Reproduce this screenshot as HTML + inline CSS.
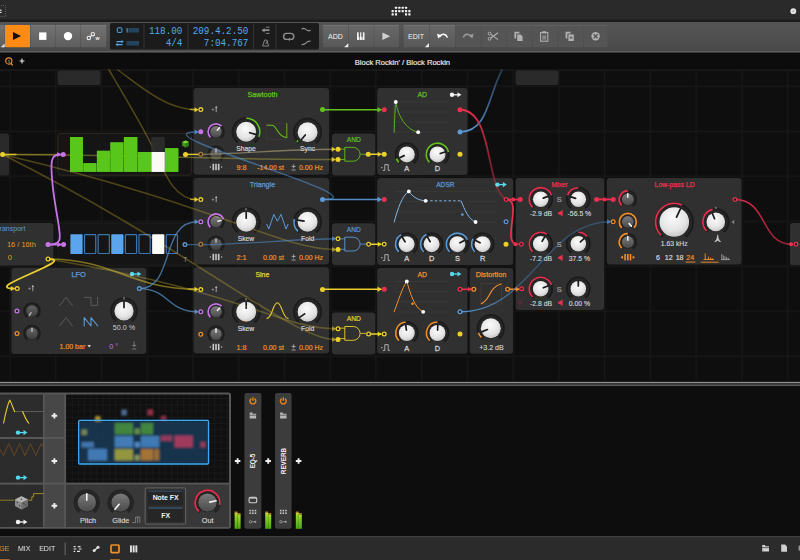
<!DOCTYPE html>
<html lang="en"><head><meta charset="utf-8"><title>Block Rockin</title>
<style>html,body{margin:0;padding:0;background:#131313;overflow:hidden}svg{display:block}</style>
</head><body>
<svg width="800" height="560" viewBox="0 0 800 560">
<defs>
<radialGradient id="kw" cx="0.45" cy="0.35" r="0.75"><stop offset="0" stop-color="#fbfbfb"/><stop offset="0.6" stop-color="#e4e4e4"/><stop offset="1" stop-color="#b9b9b9"/></radialGradient>
<linearGradient id="kd" x1="0" y1="0" x2="0" y2="1"><stop offset="0" stop-color="#7a7a7a"/><stop offset="1" stop-color="#4a4a4a"/></linearGradient>
<linearGradient id="tb" x1="0" y1="0" x2="0" y2="1"><stop offset="0" stop-color="#565656"/><stop offset="1" stop-color="#484848"/></linearGradient>
<linearGradient id="btn" x1="0" y1="0" x2="0" y2="1"><stop offset="0" stop-color="#727272"/><stop offset="1" stop-color="#5e5e5e"/></linearGradient>
<linearGradient id="btn2" x1="0" y1="0" x2="0" y2="1"><stop offset="0" stop-color="#686868"/><stop offset="1" stop-color="#585858"/></linearGradient>
<linearGradient id="vu" x1="0" y1="0" x2="0" y2="1"><stop offset="0" stop-color="#c4dc30"/><stop offset="0.2" stop-color="#8ed422"/><stop offset="1" stop-color="#4aa816"/></linearGradient>
<pattern id="grid" x="9.3" y="40.6" width="45.74" height="45" patternUnits="userSpaceOnUse"><rect width="45.74" height="45" fill="#0e0e0e"/><rect width="1.4" height="45" fill="#171717"/><rect width="45.74" height="1.4" fill="#171717"/></pattern>
<pattern id="dots" x="78" y="392" width="6.2" height="6.2" patternUnits="userSpaceOnUse"><rect width="6.2" height="6.2" fill="#101010"/><rect width="0.8" height="6.2" fill="#191919"/><rect width="6.2" height="0.8" fill="#191919"/></pattern>
<filter id="bl" x="-20%" y="-20%" width="140%" height="140%"><feGaussianBlur stdDeviation="0.9"/></filter>
</defs>
<rect x="0" y="0" width="800" height="560" fill="#0e0e0e" />
<rect x="0" y="0" width="800" height="20" fill="#2a2a2a" />
<rect x="0" y="19.5" width="800" height="3" fill="#1c1c1c" />
<rect x="0" y="22" width="800" height="30" fill="url(#tb)" />
<rect x="0" y="51.3" width="800" height="1.4" fill="#6a6a6a" />
<rect x="0" y="52.7" width="800" height="17.3" fill="#0c0c0c" />
<rect x="0" y="70" width="800" height="312" fill="url(#grid)" />
<rect x="0" y="69.5" width="800" height="1.2" fill="#1f1f1f" />
<rect x="-3" y="5.6" width="8.6" height="11" fill="none" stroke="#777" stroke-width="0.7" stroke-dasharray="1 1"/>
<rect x="0" y="9.6" width="1.6" height="1.2" fill="#ddd" />
<rect x="0" y="11.8" width="1.6" height="1.2" fill="#ddd" />
<rect x="394.9" y="6.65" width="2.2" height="2.2" fill="#f2f2f2" rx="0.5" />
<rect x="398.25" y="6.65" width="2.2" height="2.2" fill="#f2f2f2" rx="0.5" />
<rect x="401.6" y="6.65" width="2.2" height="2.2" fill="#f2f2f2" rx="0.5" />
<rect x="404.95" y="6.65" width="2.2" height="2.2" fill="#f2f2f2" rx="0.5" />
<rect x="391.55" y="10" width="2.2" height="2.2" fill="#f2f2f2" rx="0.5" />
<rect x="394.9" y="10" width="2.2" height="2.2" fill="#f2f2f2" rx="0.5" />
<rect x="398.25" y="10" width="2.2" height="2.2" fill="#f2f2f2" rx="0.5" />
<rect x="401.6" y="10" width="2.2" height="2.2" fill="#f2f2f2" rx="0.5" />
<rect x="404.95" y="10" width="2.2" height="2.2" fill="#f2f2f2" rx="0.5" />
<rect x="408.3" y="10" width="2.2" height="2.2" fill="#f2f2f2" rx="0.5" />
<rect x="391.55" y="13.35" width="2.2" height="2.2" fill="#f2f2f2" rx="0.5" />
<rect x="394.9" y="13.35" width="2.2" height="2.2" fill="#f2f2f2" rx="0.5" />
<rect x="404.95" y="13.35" width="2.2" height="2.2" fill="#f2f2f2" rx="0.5" />
<rect x="408.3" y="13.35" width="2.2" height="2.2" fill="#f2f2f2" rx="0.5" />
<circle cx="793.3" cy="11.2" r="2.9" fill="#e6e6e6" stroke="none" stroke-width="0" opacity="1"/>
<circle cx="793.3" cy="11.2" r="1.2" fill="#bdbdbd" stroke="none" stroke-width="0" opacity="1"/>
<rect x="0" y="25" width="4.6" height="22.3" fill="url(#btn)" />
<path d="M0.8 47.3L4.6 47.3L4.6 43.5Z" fill="#e8e8e8"/>
<rect x="5" y="25" width="25" height="22.3" fill="#ff8a14" rx="1" />
<path d="M13 32.1L21 36.1L13 40.1Z" fill="#111"/>
<rect x="30.5" y="25" width="24.5" height="22.3" fill="url(#btn)" rx="1" />
<rect x="30.5" y="25" width="24.5" height="0.8" fill="#8a8a8a" opacity="0.45"/>
<rect x="39.1" y="32.4" width="7.3" height="7.5" fill="#ffffff" />
<rect x="55.5" y="25" width="25" height="22.3" fill="url(#btn)" rx="1" />
<rect x="55.5" y="25" width="25" height="0.8" fill="#8a8a8a" opacity="0.45"/>
<circle cx="68" cy="36.1" r="4.2" fill="#ffffff" stroke="none" stroke-width="0" opacity="1"/>
<rect x="81" y="25" width="25.3" height="22.3" fill="url(#btn)" rx="1" />
<rect x="81" y="25" width="25.3" height="0.8" fill="#8a8a8a" opacity="0.45"/>
<circle cx="88.8" cy="38" r="1.7" fill="none" stroke="#f0f0f0" stroke-width="1.1" opacity="1"/>
<circle cx="92.8" cy="34.2" r="1.7" fill="none" stroke="#f0f0f0" stroke-width="1.1" opacity="1"/>
<line x1="90" y1="36.9" x2="91.7" y2="35.3" stroke="#f0f0f0" stroke-width="1.1" opacity="1" stroke-linecap="butt"/>
<text transform="translate(97.4 40.2) scale(0.95 1)" font-family='"Liberation Sans", sans-serif' font-size="5.4" fill="#f4f4f4" text-anchor="middle" font-weight="bold" >w</text>
<rect x="110" y="23" width="209" height="26.6" fill="#1b1b1b" rx="1.5" />
<rect x="143.6" y="23.6" width="0.8" height="25.4" fill="#3a3a3a" />
<rect x="187.6" y="23.6" width="0.8" height="25.4" fill="#3a3a3a" />
<rect x="253.1" y="23.6" width="0.8" height="25.4" fill="#3a3a3a" />
<rect x="275.6" y="23.6" width="0.8" height="25.4" fill="#3a3a3a" />
<rect x="117.3" y="27.8" width="4.6" height="4.6" fill="none" stroke="#52aae6" stroke-width="1" rx="0.8"/>
<rect x="126.6" y="28" width="1" height="4.6" fill="#52aae6" />
<rect x="128.4" y="28" width="10.6" height="4.6" fill="#24445c" />
<path d="M116.6 41.6H122.6M116.6 44.6H122.6" stroke="#52aae6" stroke-width="1.2" fill="none"/>
<path d="M121.6 39.9L123.8 41.6L121.6 43.3ZM117.6 42.9L115.4 44.6L117.6 46.3Z" fill="#52aae6"/>
<rect x="126.6" y="41" width="12.4" height="4.6" fill="#24445c" />
<text transform="translate(182.4 34) scale(0.86 1)" font-family='"Liberation Mono", monospace' font-size="10.8" fill="#52aae6" text-anchor="end" font-weight="normal" >118.00</text>
<text transform="translate(182.4 46.2) scale(0.86 1)" font-family='"Liberation Mono", monospace' font-size="10.8" fill="#52aae6" text-anchor="end" font-weight="normal" >4/4</text>
<text transform="translate(248.4 34) scale(0.86 1)" font-family='"Liberation Mono", monospace' font-size="10.8" fill="#52aae6" text-anchor="end" font-weight="normal" >209.4.2.50</text>
<text transform="translate(248.4 46.2) scale(0.86 1)" font-family='"Liberation Mono", monospace' font-size="10.8" fill="#52aae6" text-anchor="end" font-weight="normal" >7:04.767</text>
<path d="M261.5 30.2L264.7 27.9V32.5ZM264.7 29.3H269.5V31.1H264.7Z" fill="#8e8e8e"/>
<path d="M266 33.4H269.5M266 27.2H269.5" stroke="#8e8e8e" stroke-width="0.9"/>
<path d="M262.6 46L264.6 40H266.6L268.6 46ZM265.6 44L268 40.6" fill="none" stroke="#8e8e8e" stroke-width="0.9"/>
<rect x="283.6" y="33.4" width="10.2" height="6" rx="3" fill="none" stroke="#8e8e8e" stroke-width="1.4"/>
<path d="M287.4 39.4L290 37.8V41Z" fill="#8e8e8e"/>
<path d="M301.6 29.2C303.6 27.4 305 28.4 306.2 29.6C307.4 30.8 309 31.4 310.6 30" fill="none" stroke="#8e8e8e" stroke-width="1.2"/>
<path d="M301.6 44.6C304.4 44.8 305.4 43.6 306.2 42.8C307.2 41.6 308.6 41 310.6 41.2" fill="none" stroke="#8e8e8e" stroke-width="1.2"/>
<rect x="323" y="25" width="25.4" height="22.3" fill="url(#btn2)" rx="1" />
<rect x="323" y="25" width="25.4" height="0.8" fill="#8a8a8a" opacity="0.45"/>
<path d="M344.2 47.3L348.4 47.3L348.4 43.1Z" fill="#e8e8e8"/>
<text transform="translate(335.4 39.2) scale(0.95 1)" font-family='"Liberation Sans", sans-serif' font-size="7.4" fill="#f2f2f2" text-anchor="middle" font-weight="normal" >ADD</text>
<rect x="349" y="25" width="24.6" height="22.3" fill="url(#btn2)" rx="1" />
<rect x="349" y="25" width="24.6" height="0.8" fill="#8a8a8a" opacity="0.45"/>
<rect x="357" y="32.4" width="2.1" height="7.6" fill="#f4f4f4" />
<rect x="359.7" y="32.4" width="2.1" height="7.6" fill="#f4f4f4" />
<rect x="362.4" y="32.4" width="2.1" height="7.6" fill="#f4f4f4" />
<rect x="358.7" y="32.4" width="1.4" height="4.4" fill="#5a5a5a" />
<rect x="361.4" y="32.4" width="1.4" height="4.4" fill="#5a5a5a" />
<rect x="374.2" y="25" width="24.8" height="22.3" fill="url(#btn2)" rx="1" />
<rect x="374.2" y="25" width="24.8" height="0.8" fill="#8a8a8a" opacity="0.45"/>
<path d="M382.4 32.4L390.2 36.2L382.4 40Z" fill="#d0d0d0"/>
<rect x="403.6" y="25" width="25.4" height="22.3" fill="url(#btn2)" rx="1" />
<rect x="403.6" y="25" width="25.4" height="0.8" fill="#8a8a8a" opacity="0.45"/>
<path d="M424.8 47.3L429 47.3L429 43.1Z" fill="#e8e8e8"/>
<text transform="translate(416 39.2) scale(0.95 1)" font-family='"Liberation Sans", sans-serif' font-size="7.4" fill="#f2f2f2" text-anchor="middle" font-weight="normal" >EDIT</text>
<rect x="429.6" y="25" width="25.4" height="22.3" fill="url(#btn2)" rx="1" />
<rect x="429.6" y="25" width="25.4" height="0.8" fill="#8a8a8a" opacity="0.45"/>
<path d="M439.6 36.8C441.4 33.4 445.6 33 447.4 37.6" fill="none" stroke="#fff" stroke-width="1.5"/>
<path d="M437 33.8L441.8 35.2L438.2 38.6Z" fill="#fff"/>
<rect x="455.6" y="25" width="25.2" height="22.3" fill="#555555" rx="1" />
<rect x="455.6" y="25" width="25.2" height="0.8" fill="#777" opacity="0.4"/>
<rect x="481.4" y="25" width="25" height="22.3" fill="#555555" rx="1" />
<rect x="481.4" y="25" width="25" height="0.8" fill="#777" opacity="0.4"/>
<rect x="507" y="25" width="25" height="22.3" fill="#555555" rx="1" />
<rect x="507" y="25" width="25" height="0.8" fill="#777" opacity="0.4"/>
<rect x="532.6" y="25" width="25" height="22.3" fill="#555555" rx="1" />
<rect x="532.6" y="25" width="25" height="0.8" fill="#777" opacity="0.4"/>
<rect x="558.2" y="25" width="25" height="22.3" fill="#555555" rx="1" />
<rect x="558.2" y="25" width="25" height="0.8" fill="#777" opacity="0.4"/>
<rect x="583.8" y="25" width="23.8" height="22.3" fill="#555555" rx="1" />
<rect x="583.8" y="25" width="23.8" height="0.8" fill="#777" opacity="0.4"/>
<path d="M463.2 37.6C465 33 469.2 33.4 471 36.8" fill="none" stroke="#9c9c9c" stroke-width="1.4"/>
<path d="M473.6 33.8L468.8 35.2L472.4 38.6Z" fill="#9c9c9c"/>
<circle cx="489.6" cy="33.6" r="1.4" fill="none" stroke="#b0b0b0" stroke-width="1" opacity="1"/>
<circle cx="489.6" cy="38.8" r="1.4" fill="none" stroke="#b0b0b0" stroke-width="1" opacity="1"/>
<path d="M490.8 34.4L498 39.6M490.8 38L498 32.8" stroke="#b0b0b0" stroke-width="1.1" fill="none"/>
<path d="M514.4 31.8H519.4V33.4H516.2V38.4H514.4Z" fill="#b0b0b0"/>
<path d="M517.2 34.4H520.6L522.6 36.4V41H517.2Z" fill="#b0b0b0"/>
<rect x="540.6" y="32.6" width="7.2" height="8.6" fill="none" stroke="#b0b0b0" stroke-width="1.1"/>
<rect x="542.4" y="31.2" width="3.6" height="2.2" fill="#b0b0b0" />
<rect x="542.2" y="35.4" width="4" height="4.2" fill="#b0b0b0" opacity="0.55"/>
<path d="M565.6 31.8H570.6V33.4H567.4V38.4H565.6Z" fill="#b0b0b0"/>
<path d="M568.4 34.4H573.8V41H568.4Z" fill="#b0b0b0"/>
<path d="M569.8 37.7H572.4M571.1 36.4V39" stroke="#555555" stroke-width="0.9"/>
<circle cx="595.6" cy="36.2" r="4.2" fill="#b0b0b0" stroke="none" stroke-width="0" opacity="1"/>
<path d="M593.6 34.2L597.6 38.2M597.6 34.2L593.6 38.2" stroke="#555555" stroke-width="1.3"/>
<circle cx="8.8" cy="61" r="3.1" fill="none" stroke="#f0902a" stroke-width="1.1" opacity="1"/>
<line x1="11" y1="63.4" x2="12.8" y2="65.4" stroke="#f0902a" stroke-width="1.3" opacity="1" stroke-linecap="butt"/>
<text transform="translate(8.8 62.8) scale(1 1)" font-family='"Liberation Sans", sans-serif' font-size="4.2" fill="#f0902a" text-anchor="middle" font-weight="bold" >1</text>
<path d="M19.6 61H24.4M22 58.6V63.4" stroke="#e8e8e8" stroke-width="1.1"/>
<text x="402.4" y="65.2" textLength="95.4" lengthAdjust="spacingAndGlyphs" font-family='"Liberation Sans", sans-serif' font-size="8.1" fill="#e6e6e6" text-anchor="middle" font-weight="normal"  stroke="#e6e6e6" stroke-width="0.2">Block Rockin' / Block Rockin</text>
<g>
<rect x="57.5" y="70.6" width="43" height="14.4" fill="#2a2a2a" rx="2.5" />
<rect x="515.5" y="70.6" width="43" height="14.4" fill="#2a2a2a" rx="2.5" />
<rect x="-3" y="133.5" width="12" height="42" fill="#2a2a2a" rx="2.5" />
<rect x="790" y="223" width="14" height="42.3" fill="#303030" rx="2.5" />
<rect x="57.8" y="133.4" width="133.6" height="41.8" rx="2.5" fill="#151515" stroke="#332a22" stroke-width="0.9"/>
<rect x="70" y="137" width="12.9" height="34.8" fill="#58c61c" />
<rect x="83.4" y="163.2" width="13" height="8.6" fill="#58c61c" />
<rect x="96.9" y="150.8" width="13" height="21" fill="#58c61c" />
<rect x="110.4" y="142.4" width="13" height="29.4" fill="#58c61c" />
<rect x="123.9" y="137" width="13.4" height="34.8" fill="#58c61c" />
<rect x="137.8" y="152" width="13.2" height="19.8" fill="#58c61c" />
<rect x="151.5" y="137" width="13.1" height="15" fill="#2c2c2c" />
<rect x="151.5" y="152" width="13.1" height="19.8" fill="#fbfbf6" />
<rect x="165.1" y="148.2" width="13.2" height="23.6" fill="#58c61c" />
<path d="M182.2 142L185.6 140.4L189 142V145.8L185.6 147.6L182.2 145.8Z" fill="#3f9a18"/>
<path d="M182.2 142L185.6 143.6L189 142L185.6 140.4Z" fill="#7ad63a"/>
<path d="M185.6 143.6V147.6L189 145.8V142Z" fill="#2f7a12"/>
<rect x="-3" y="223" width="56.6" height="42.4" fill="#303030" rx="3" />
<text transform="translate(-4.4 231) scale(0.9 1)" font-family='"Liberation Sans", sans-serif' font-size="7.8" fill="#5b9bd8">Transport</text>
<text transform="translate(21.4 247.4) scale(0.95 1)" font-family='"Liberation Sans", sans-serif' font-size="7.8" fill="#f0902a" text-anchor="middle" font-weight="normal" >16 / 16th</text>
<text transform="translate(9.8 259.6) scale(0.95 1)" font-family='"Liberation Sans", sans-serif' font-size="7.8" fill="#f0902a" text-anchor="middle" font-weight="normal" >0</text>
<rect x="57.8" y="223.2" width="133.6" height="42" rx="2.5" fill="#151515" stroke="#222" stroke-width="0.8"/>
<rect x="70.4" y="234.2" width="12.2" height="19.8" fill="#5aa5ee" rx="0.8" />
<rect x="84.52" y="234.7" width="11.2" height="18.8" fill="none" stroke="#3a76b2" stroke-width="1.2" rx="0.8"/>
<rect x="98.14" y="234.7" width="11.2" height="18.8" fill="none" stroke="#3a76b2" stroke-width="1.2" rx="0.8"/>
<rect x="111.26" y="234.2" width="12.2" height="19.8" fill="#5aa5ee" rx="0.8" />
<rect x="125.38" y="234.7" width="11.2" height="18.8" fill="none" stroke="#3a76b2" stroke-width="1.2" rx="0.8"/>
<rect x="139" y="234.7" width="11.2" height="18.8" fill="none" stroke="#3a76b2" stroke-width="1.2" rx="0.8"/>
<rect x="152.12" y="234.2" width="12.2" height="19.8" fill="#fbfbf8" rx="0.8" />
<rect x="166.24" y="234.7" width="11.2" height="18.8" fill="none" stroke="#3a76b2" stroke-width="1.2" rx="0.8"/>
<text transform="translate(185.2 262) scale(0.9 1)" font-family='"Liberation Sans", sans-serif' font-size="6.5" fill="#9a9a9a" text-anchor="middle" font-weight="normal" >T</text>
<rect x="193.6" y="88" width="135.4" height="86.8" fill="#303030" rx="3" />
<text x="262.4" y="97.4" textLength="30" lengthAdjust="spacingAndGlyphs" font-family='"Liberation Sans", sans-serif' font-size="7.5" fill="#62c21c" text-anchor="middle" font-weight="normal"  stroke="#62c21c" stroke-width="0.25">Sawtooth</text>
<path d="M211.6 109.6H214.2M212.9 108.3V110.9" stroke="#8c8c8c" stroke-width="0.8"/>
<path d="M216.2 107.4V112.2" stroke="#b0b0b0" stroke-width="0.9"/>
<path d="M216.2 105.8L214.9 108L217.5 108Z" fill="#b0b0b0"/>
<path d="M211.7 137.51A7.15 7.15 0 1 1 220.3 137.51" fill="none" stroke="#272727" stroke-width="3.3" stroke-linecap="butt" opacity="1"/>
<path d="M211.03 137.94A7.9 7.9 0 1 1 220.97 137.94" fill="none" stroke="#1d1d1d" stroke-width="1.5" stroke-linecap="butt" opacity="1"/>
<path d="M210.41 137.39A7.9 7.9 0 0 1 221.59 126.21" fill="none" stroke="#c873ea" stroke-width="1.7" stroke-linecap="butt" opacity="1"/>
<circle cx="216" cy="131.8" r="6.1" fill="#1f1f1f" stroke="none" stroke-width="0" opacity="1"/>
<circle cx="216" cy="131.8" r="5.7" fill="url(#kd)" stroke="none" stroke-width="0" opacity="1"/>
<line x1="217.28" y1="130.27" x2="219.48" y2="127.65" stroke="#f0f0f0" stroke-width="1.5" opacity="1" stroke-linecap="round"/>
<path d="M211.7 159.91A7.15 7.15 0 1 1 220.3 159.91" fill="none" stroke="#272727" stroke-width="3.3" stroke-linecap="butt" opacity="1"/>
<path d="M211.03 160.34A7.9 7.9 0 1 1 220.97 160.34" fill="none" stroke="#1d1d1d" stroke-width="1.5" stroke-linecap="butt" opacity="1"/>
<circle cx="216" cy="154.2" r="6.1" fill="#1f1f1f" stroke="none" stroke-width="0" opacity="1"/>
<circle cx="216" cy="154.2" r="5.7" fill="url(#kd)" stroke="none" stroke-width="0" opacity="0.75"/>
<line x1="216" y1="152.2" x2="216" y2="148.78" stroke="#f0f0f0" stroke-width="1.5" opacity="0.6" stroke-linecap="round"/>
<rect x="212.5" y="163.8" width="1.6" height="6.4" fill="#c8c8c8" />
<rect x="215.2" y="163.8" width="1.6" height="6.4" fill="#c8c8c8" />
<rect x="217.9" y="163.8" width="1.6" height="6.4" fill="#c8c8c8" />
<rect x="209.8" y="166.4" width="1.2" height="1.2" fill="#c8c8c8" />
<rect x="221" y="166.4" width="1.2" height="1.2" fill="#c8c8c8" />
<path d="M238.89 141.5A12.15 12.15 0 1 1 253.51 141.5" fill="none" stroke="#272727" stroke-width="4.7" stroke-linecap="butt" opacity="1"/>
<path d="M237.64 142.37A13.6 13.6 0 1 1 254.76 142.37" fill="none" stroke="#1b1b1b" stroke-width="1.6" stroke-linecap="butt" opacity="1"/>
<path d="M246.2 118.2A13.6 13.6 0 0 1 258.81 136.89" fill="none" stroke="#62c21c" stroke-width="1.6" stroke-linecap="butt" opacity="1"/>
<circle cx="246.2" cy="131.8" r="10.5" fill="#1f1f1f" stroke="none" stroke-width="0" opacity="1"/>
<circle cx="246.2" cy="131.8" r="10" fill="url(#kw)" stroke="none" stroke-width="0" opacity="1"/>
<line x1="249.68" y1="132.73" x2="255.67" y2="134.34" stroke="#1a1a1a" stroke-width="1.7" opacity="1" stroke-linecap="round"/>
<path d="M300.29 141.9A12.15 12.15 0 1 1 314.91 141.9" fill="none" stroke="#272727" stroke-width="4.7" stroke-linecap="butt" opacity="1"/>
<path d="M299.04 142.77A13.6 13.6 0 1 1 316.16 142.77" fill="none" stroke="#1b1b1b" stroke-width="1.6" stroke-linecap="butt" opacity="1"/>
<path d="M297.98 141.82A13.6 13.6 0 0 1 296.88 140.57" fill="none" stroke="#62c21c" stroke-width="1.6" stroke-linecap="butt" opacity="1"/>
<circle cx="307.6" cy="132.2" r="10.5" fill="#1f1f1f" stroke="none" stroke-width="0" opacity="1"/>
<circle cx="307.6" cy="132.2" r="10" fill="url(#kw)" stroke="none" stroke-width="0" opacity="1"/>
<line x1="305.29" y1="134.96" x2="301.3" y2="139.71" stroke="#1a1a1a" stroke-width="1.7" opacity="1" stroke-linecap="round"/>
<path d="M266.6 125.2H272C277 125.2 277.5 137.2 286.8 137.6V123.4" fill="none" stroke="#62c21c" stroke-width="1.1" opacity="1" stroke-linecap="round" stroke-linejoin="round" />
<rect x="266.6" y="123.2" width="20.4" height="16.4" fill="none" stroke="#4a3a30" stroke-width="0.5"/>
<text transform="translate(246 151.2) scale(0.9 1)" font-family='"Liberation Sans", sans-serif' font-size="7.5" fill="#d6d6d6" text-anchor="middle" font-weight="normal"  stroke="#d6d6d6" stroke-width="0.2">Shape</text>
<text transform="translate(307.6 151.2) scale(0.9 1)" font-family='"Liberation Sans", sans-serif' font-size="7.5" fill="#d6d6d6" text-anchor="middle" font-weight="normal"  stroke="#d6d6d6" stroke-width="0.2">Sync</text>
<text transform="translate(241.4 170) scale(0.95 1)" font-family='"Liberation Sans", sans-serif' font-size="7.6" fill="#f0902a" text-anchor="middle" font-weight="normal"  stroke="#f0902a" stroke-width="0.2">9:8</text>
<text transform="translate(270.6 170) scale(0.9 1)" font-family='"Liberation Sans", sans-serif' font-size="7.6" fill="#f0902a" text-anchor="middle" font-weight="normal"  stroke="#f0902a" stroke-width="0.2">-14.00 st</text>
<path d="M291.6 166.4H295.6M293.6 164.4V168.4M291.6 170H295.6" stroke="#b8b8b8" stroke-width="0.8" fill="none"/>
<text transform="translate(311 170) scale(0.92 1)" font-family='"Liberation Sans", sans-serif' font-size="7.6" fill="#f0902a" text-anchor="middle" font-weight="normal"  stroke="#f0902a" stroke-width="0.2">0.00 Hz</text>
<rect x="193.6" y="177.8" width="135.4" height="86.6" fill="#303030" rx="3" />
<text x="262.4" y="187.4" textLength="25.4" lengthAdjust="spacingAndGlyphs" font-family='"Liberation Sans", sans-serif' font-size="7.5" fill="#5b9bd8" text-anchor="middle" font-weight="normal"  stroke="#5b9bd8" stroke-width="0.25">Triangle</text>
<path d="M211.6 199.6H214.2M212.9 198.3V200.9" stroke="#8c8c8c" stroke-width="0.8"/>
<path d="M216.2 197.4V202.2" stroke="#b0b0b0" stroke-width="0.9"/>
<path d="M216.2 195.8L214.9 198L217.5 198Z" fill="#b0b0b0"/>
<path d="M211.7 227.51A7.15 7.15 0 1 1 220.3 227.51" fill="none" stroke="#272727" stroke-width="3.3" stroke-linecap="butt" opacity="1"/>
<path d="M211.03 227.94A7.9 7.9 0 1 1 220.97 227.94" fill="none" stroke="#1d1d1d" stroke-width="1.5" stroke-linecap="butt" opacity="1"/>
<path d="M210.41 227.39A7.9 7.9 0 1 1 223.42 219.1" fill="none" stroke="#c873ea" stroke-width="1.7" stroke-linecap="butt" opacity="1"/>
<circle cx="216" cy="221.8" r="6.1" fill="#1f1f1f" stroke="none" stroke-width="0" opacity="1"/>
<circle cx="216" cy="221.8" r="5.7" fill="url(#kd)" stroke="none" stroke-width="0" opacity="1"/>
<line x1="217.93" y1="221.28" x2="221.23" y2="220.4" stroke="#f4f4f4" stroke-width="1.5" opacity="1" stroke-linecap="round"/>
<path d="M211.7 249.91A7.15 7.15 0 1 1 220.3 249.91" fill="none" stroke="#272727" stroke-width="3.3" stroke-linecap="butt" opacity="1"/>
<path d="M211.03 250.34A7.9 7.9 0 1 1 220.97 250.34" fill="none" stroke="#1d1d1d" stroke-width="1.5" stroke-linecap="butt" opacity="1"/>
<circle cx="216" cy="244.2" r="6.1" fill="#1f1f1f" stroke="none" stroke-width="0" opacity="1"/>
<circle cx="216" cy="244.2" r="5.7" fill="url(#kd)" stroke="none" stroke-width="0" opacity="0.75"/>
<line x1="216" y1="242.2" x2="216" y2="238.78" stroke="#f0f0f0" stroke-width="1.5" opacity="0.6" stroke-linecap="round"/>
<rect x="212.5" y="253.8" width="1.6" height="6.4" fill="#c8c8c8" />
<rect x="215.2" y="253.8" width="1.6" height="6.4" fill="#c8c8c8" />
<rect x="217.9" y="253.8" width="1.6" height="6.4" fill="#c8c8c8" />
<rect x="209.8" y="256.4" width="1.2" height="1.2" fill="#c8c8c8" />
<rect x="221" y="256.4" width="1.2" height="1.2" fill="#c8c8c8" />
<path d="M238.89 231.5A12.15 12.15 0 1 1 253.51 231.5" fill="none" stroke="#272727" stroke-width="4.7" stroke-linecap="butt" opacity="1"/>
<path d="M237.64 232.37A13.6 13.6 0 1 1 254.76 232.37" fill="none" stroke="#1b1b1b" stroke-width="1.6" stroke-linecap="butt" opacity="1"/>
<circle cx="246.2" cy="221.8" r="10.5" fill="#1f1f1f" stroke="none" stroke-width="0" opacity="1"/>
<circle cx="246.2" cy="221.8" r="10" fill="url(#kw)" stroke="none" stroke-width="0" opacity="1"/>
<line x1="246.2" y1="218.2" x2="246.2" y2="212" stroke="#1a1a1a" stroke-width="1.7" opacity="1" stroke-linecap="round"/>
<line x1="246" y1="208" x2="246" y2="210.4" stroke="#9a9a9a" stroke-width="1" opacity="1" stroke-linecap="butt"/>
<path d="M300.29 231.5A12.15 12.15 0 1 1 314.91 231.5" fill="none" stroke="#272727" stroke-width="4.7" stroke-linecap="butt" opacity="1"/>
<path d="M299.04 232.37A13.6 13.6 0 1 1 316.16 232.37" fill="none" stroke="#1b1b1b" stroke-width="1.6" stroke-linecap="butt" opacity="1"/>
<path d="M297.98 231.42A13.6 13.6 0 0 1 294.3 218.97" fill="none" stroke="#5b9bd8" stroke-width="1.6" stroke-linecap="butt" opacity="1"/>
<circle cx="307.6" cy="221.8" r="10.5" fill="#1f1f1f" stroke="none" stroke-width="0" opacity="1"/>
<circle cx="307.6" cy="221.8" r="10" fill="url(#kw)" stroke="none" stroke-width="0" opacity="1"/>
<line x1="304.05" y1="221.17" x2="297.95" y2="220.1" stroke="#1a1a1a" stroke-width="1.7" opacity="1" stroke-linecap="round"/>
<path d="M266.8 224.4L268.8 229L273.8 214.4L277.4 221.2L281 214.4L286 229L288 224.4" fill="none" stroke="#5b9bd8" stroke-width="1" opacity="1" stroke-linecap="round" stroke-linejoin="round" />
<text transform="translate(246 241.4) scale(0.9 1)" font-family='"Liberation Sans", sans-serif' font-size="7.5" fill="#d6d6d6" text-anchor="middle" font-weight="normal"  stroke="#d6d6d6" stroke-width="0.2">Skew</text>
<text transform="translate(307.6 241.4) scale(0.9 1)" font-family='"Liberation Sans", sans-serif' font-size="7.5" fill="#d6d6d6" text-anchor="middle" font-weight="normal"  stroke="#d6d6d6" stroke-width="0.2">Fold</text>
<text transform="translate(241.4 260) scale(0.95 1)" font-family='"Liberation Sans", sans-serif' font-size="7.6" fill="#f0902a" text-anchor="middle" font-weight="normal"  stroke="#f0902a" stroke-width="0.2">2:1</text>
<text transform="translate(273.4 260) scale(0.92 1)" font-family='"Liberation Sans", sans-serif' font-size="7.6" fill="#f0902a" text-anchor="middle" font-weight="normal"  stroke="#f0902a" stroke-width="0.2">0.00 st</text>
<path d="M291.6 256.4H295.6M293.6 254.4V258.4M291.6 260H295.6" stroke="#b8b8b8" stroke-width="0.8" fill="none"/>
<text transform="translate(311 260) scale(0.92 1)" font-family='"Liberation Sans", sans-serif' font-size="7.6" fill="#f0902a" text-anchor="middle" font-weight="normal"  stroke="#f0902a" stroke-width="0.2">0.00 Hz</text>
<rect x="193.6" y="267.2" width="135.4" height="86.4" fill="#303030" rx="3" />
<text x="262.4" y="277.4" textLength="14" lengthAdjust="spacingAndGlyphs" font-family='"Liberation Sans", sans-serif' font-size="7.5" fill="#ecd02c" text-anchor="middle" font-weight="normal"  stroke="#ecd02c" stroke-width="0.25">Sine</text>
<path d="M211.6 289.6H214.2M212.9 288.3V290.9" stroke="#8c8c8c" stroke-width="0.8"/>
<path d="M216.2 287.4V292.2" stroke="#b0b0b0" stroke-width="0.9"/>
<path d="M216.2 285.8L214.9 288L217.5 288Z" fill="#b0b0b0"/>
<path d="M211.7 317.51A7.15 7.15 0 1 1 220.3 317.51" fill="none" stroke="#272727" stroke-width="3.3" stroke-linecap="butt" opacity="1"/>
<path d="M211.03 317.94A7.9 7.9 0 1 1 220.97 317.94" fill="none" stroke="#1d1d1d" stroke-width="1.5" stroke-linecap="butt" opacity="1"/>
<path d="M210.41 317.39A7.9 7.9 0 0 1 221.59 306.21" fill="none" stroke="#c873ea" stroke-width="1.7" stroke-linecap="butt" opacity="1"/>
<circle cx="216" cy="311.8" r="6.1" fill="#1f1f1f" stroke="none" stroke-width="0" opacity="1"/>
<circle cx="216" cy="311.8" r="5.7" fill="url(#kd)" stroke="none" stroke-width="0" opacity="1"/>
<line x1="217.41" y1="310.39" x2="219.83" y2="307.97" stroke="#f0f0f0" stroke-width="1.5" opacity="1" stroke-linecap="round"/>
<path d="M211.7 339.91A7.15 7.15 0 1 1 220.3 339.91" fill="none" stroke="#272727" stroke-width="3.3" stroke-linecap="butt" opacity="1"/>
<path d="M211.03 340.34A7.9 7.9 0 1 1 220.97 340.34" fill="none" stroke="#1d1d1d" stroke-width="1.5" stroke-linecap="butt" opacity="1"/>
<circle cx="216" cy="334.2" r="6.1" fill="#1f1f1f" stroke="none" stroke-width="0" opacity="1"/>
<circle cx="216" cy="334.2" r="5.7" fill="url(#kd)" stroke="none" stroke-width="0" opacity="1"/>
<line x1="216" y1="332.2" x2="216" y2="328.78" stroke="#f0f0f0" stroke-width="1.5" opacity="1" stroke-linecap="round"/>
<rect x="212.5" y="343.8" width="1.6" height="6.4" fill="#c8c8c8" />
<rect x="215.2" y="343.8" width="1.6" height="6.4" fill="#c8c8c8" />
<rect x="217.9" y="343.8" width="1.6" height="6.4" fill="#c8c8c8" />
<rect x="209.8" y="346.4" width="1.2" height="1.2" fill="#c8c8c8" />
<rect x="221" y="346.4" width="1.2" height="1.2" fill="#c8c8c8" />
<path d="M238.89 321.5A12.15 12.15 0 1 1 253.51 321.5" fill="none" stroke="#272727" stroke-width="4.7" stroke-linecap="butt" opacity="1"/>
<path d="M237.64 322.37A13.6 13.6 0 1 1 254.76 322.37" fill="none" stroke="#1b1b1b" stroke-width="1.6" stroke-linecap="butt" opacity="1"/>
<circle cx="246.2" cy="311.8" r="10.5" fill="#1f1f1f" stroke="none" stroke-width="0" opacity="1"/>
<circle cx="246.2" cy="311.8" r="10" fill="url(#kw)" stroke="none" stroke-width="0" opacity="1"/>
<line x1="246.2" y1="308.2" x2="246.2" y2="302" stroke="#1a1a1a" stroke-width="1.7" opacity="1" stroke-linecap="round"/>
<line x1="246" y1="298" x2="246" y2="300.4" stroke="#9a9a9a" stroke-width="1" opacity="1" stroke-linecap="butt"/>
<path d="M300.29 321.5A12.15 12.15 0 1 1 314.91 321.5" fill="none" stroke="#272727" stroke-width="4.7" stroke-linecap="butt" opacity="1"/>
<path d="M299.04 322.37A13.6 13.6 0 1 1 316.16 322.37" fill="none" stroke="#1b1b1b" stroke-width="1.6" stroke-linecap="butt" opacity="1"/>
<circle cx="307.6" cy="311.8" r="10.5" fill="#1f1f1f" stroke="none" stroke-width="0" opacity="1"/>
<circle cx="307.6" cy="311.8" r="10" fill="url(#kw)" stroke="none" stroke-width="0" opacity="1"/>
<line x1="304.65" y1="313.86" x2="299.57" y2="317.42" stroke="#1a1a1a" stroke-width="1.7" opacity="1" stroke-linecap="round"/>
<path d="M267 318.4C272 318.4 273 302.8 277.4 302.8C281.6 302.8 283 318.4 288 318.4" fill="none" stroke="#ecd02c" stroke-width="1.1" opacity="1" stroke-linecap="round" stroke-linejoin="round" />
<text transform="translate(246 331.4) scale(0.9 1)" font-family='"Liberation Sans", sans-serif' font-size="7.5" fill="#d6d6d6" text-anchor="middle" font-weight="normal"  stroke="#d6d6d6" stroke-width="0.2">Skew</text>
<text transform="translate(307.6 331.4) scale(0.9 1)" font-family='"Liberation Sans", sans-serif' font-size="7.5" fill="#d6d6d6" text-anchor="middle" font-weight="normal"  stroke="#d6d6d6" stroke-width="0.2">Fold</text>
<text transform="translate(241.4 350) scale(0.95 1)" font-family='"Liberation Sans", sans-serif' font-size="7.6" fill="#f0902a" text-anchor="middle" font-weight="normal"  stroke="#f0902a" stroke-width="0.2">1:8</text>
<text transform="translate(273.4 350) scale(0.92 1)" font-family='"Liberation Sans", sans-serif' font-size="7.6" fill="#f0902a" text-anchor="middle" font-weight="normal"  stroke="#f0902a" stroke-width="0.2">0.00 st</text>
<path d="M291.6 346.4H295.6M293.6 344.4V348.4M291.6 350H295.6" stroke="#b8b8b8" stroke-width="0.8" fill="none"/>
<text transform="translate(311 350) scale(0.92 1)" font-family='"Liberation Sans", sans-serif' font-size="7.6" fill="#f0902a" text-anchor="middle" font-weight="normal"  stroke="#f0902a" stroke-width="0.2">0.00 Hz</text>
<rect x="332" y="133.5" width="43.2" height="42" fill="#303030" rx="3" />
<text x="353.8" y="142.1" textLength="14" lengthAdjust="spacingAndGlyphs" font-family='"Liberation Sans", sans-serif' font-size="7.5" fill="#62c21c" text-anchor="middle" font-weight="normal"  stroke="#62c21c" stroke-width="0.2">AND</text>
<path d="M345.2 147.4H353.2A6.9 6.9 0 0 1 353.2 161.2H345.2Z" fill="none" stroke="#62c21c" stroke-width="0.9" opacity="1" stroke-linecap="round" stroke-linejoin="round" />
<line x1="340" y1="149.1" x2="345.2" y2="149.1" stroke="#62c21c" stroke-width="0.8" opacity="1" stroke-linecap="butt"/>
<line x1="340" y1="159.5" x2="345.2" y2="159.5" stroke="#62c21c" stroke-width="0.8" opacity="1" stroke-linecap="butt"/>
<line x1="360.2" y1="154.3" x2="366" y2="154.3" stroke="#62c21c" stroke-width="0.8" opacity="1" stroke-linecap="butt"/>
<rect x="332" y="223.3" width="43.2" height="42" fill="#303030" rx="3" />
<text x="353.8" y="231.9" textLength="14" lengthAdjust="spacingAndGlyphs" font-family='"Liberation Sans", sans-serif' font-size="7.5" fill="#5b9bd8" text-anchor="middle" font-weight="normal"  stroke="#5b9bd8" stroke-width="0.2">AND</text>
<path d="M345.2 237.2H353.2A6.9 6.9 0 0 1 353.2 251H345.2Z" fill="none" stroke="#5b9bd8" stroke-width="0.9" opacity="1" stroke-linecap="round" stroke-linejoin="round" />
<line x1="340" y1="238.9" x2="345.2" y2="238.9" stroke="#5b9bd8" stroke-width="0.8" opacity="1" stroke-linecap="butt"/>
<line x1="340" y1="249.3" x2="345.2" y2="249.3" stroke="#5b9bd8" stroke-width="0.8" opacity="1" stroke-linecap="butt"/>
<line x1="360.2" y1="244.1" x2="366" y2="244.1" stroke="#5b9bd8" stroke-width="0.8" opacity="1" stroke-linecap="butt"/>
<rect x="332" y="312.6" width="43.2" height="42" fill="#303030" rx="3" />
<text x="353.8" y="321.2" textLength="14" lengthAdjust="spacingAndGlyphs" font-family='"Liberation Sans", sans-serif' font-size="7.5" fill="#ecd02c" text-anchor="middle" font-weight="normal"  stroke="#ecd02c" stroke-width="0.2">AND</text>
<path d="M345.2 326.5H353.2A6.9 6.9 0 0 1 353.2 340.3H345.2Z" fill="none" stroke="#ecd02c" stroke-width="0.9" opacity="1" stroke-linecap="round" stroke-linejoin="round" />
<line x1="340" y1="328.2" x2="345.2" y2="328.2" stroke="#ecd02c" stroke-width="0.8" opacity="1" stroke-linecap="butt"/>
<line x1="340" y1="338.6" x2="345.2" y2="338.6" stroke="#ecd02c" stroke-width="0.8" opacity="1" stroke-linecap="butt"/>
<line x1="360.2" y1="333.4" x2="366" y2="333.4" stroke="#ecd02c" stroke-width="0.8" opacity="1" stroke-linecap="butt"/>
<rect x="377.2" y="88" width="90.2" height="87" fill="#303030" rx="3" />
<text x="422.2" y="97.2" textLength="9.6" lengthAdjust="spacingAndGlyphs" font-family='"Liberation Sans", sans-serif' font-size="7.5" fill="#62c21c" text-anchor="middle" font-weight="normal"  stroke="#62c21c" stroke-width="0.25">AD</text>
<circle cx="452" cy="94.8" r="2.2" fill="#f4f4f4" stroke="none" stroke-width="0" opacity="1"/>
<line x1="452.6" y1="94.8" x2="459" y2="94.8" stroke="#f4f4f4" stroke-width="1.3" opacity="1" stroke-linecap="butt"/>
<path d="M461.4 94.8L457.5 92.25L457.5 97.35Z" fill="#f4f4f4" opacity="1"/>
<line x1="394" y1="102" x2="449" y2="102" stroke="#3e3e3e" stroke-width="0.6" opacity="1" stroke-linecap="butt"/>
<line x1="394" y1="112" x2="449" y2="112" stroke="#3e3e3e" stroke-width="0.6" opacity="1" stroke-linecap="butt"/>
<line x1="394" y1="122" x2="449" y2="122" stroke="#3e3e3e" stroke-width="0.6" opacity="1" stroke-linecap="butt"/>
<line x1="394" y1="132.2" x2="449" y2="132.2" stroke="#3e3e3e" stroke-width="0.6" opacity="1" stroke-linecap="butt"/>
<line x1="394" y1="101" x2="394" y2="132.6" stroke="#4a4a4a" stroke-width="0.7" opacity="1" stroke-linecap="butt"/>
<path d="M394.2 132.4C394.6 120 395 108 395.8 102C398 116 406 130 418 132.2" fill="none" stroke="#58ac22" stroke-width="1" opacity="1" stroke-linecap="round" stroke-linejoin="round" />
<circle cx="395.8" cy="102" r="1.9" fill="#fff" stroke="none" stroke-width="0" opacity="1"/>
<circle cx="418.2" cy="132.2" r="1.9" fill="#fff" stroke="none" stroke-width="0" opacity="1"/>
<path d="M400.81 162.35A9.95 9.95 0 1 1 412.79 162.35" fill="none" stroke="#272727" stroke-width="4.3" stroke-linecap="butt" opacity="1"/>
<path d="M399.75 163.1A11.2 11.2 0 1 1 413.85 163.1" fill="none" stroke="#1b1b1b" stroke-width="1.6" stroke-linecap="butt" opacity="1"/>
<path d="M398.88 162.32A11.2 11.2 0 0 1 396.42 158.6" fill="none" stroke="#62c21c" stroke-width="1.6" stroke-linecap="butt" opacity="1"/>
<circle cx="406.8" cy="154.4" r="8.5" fill="#1f1f1f" stroke="none" stroke-width="0" opacity="1"/>
<circle cx="406.8" cy="154.4" r="8" fill="url(#kw)" stroke="none" stroke-width="0" opacity="1"/>
<line x1="404.19" y1="155.62" x2="399.69" y2="157.71" stroke="#1a1a1a" stroke-width="1.7" opacity="1" stroke-linecap="round"/>
<path d="M431.51 162.35A9.95 9.95 0 1 1 443.49 162.35" fill="none" stroke="#272727" stroke-width="4.3" stroke-linecap="butt" opacity="1"/>
<path d="M430.45 163.1A11.2 11.2 0 1 1 444.55 163.1" fill="none" stroke="#1b1b1b" stroke-width="1.6" stroke-linecap="butt" opacity="1"/>
<path d="M429.58 162.32A11.2 11.2 0 1 1 448.46 152.07" fill="none" stroke="#62c21c" stroke-width="1.6" stroke-linecap="butt" opacity="1"/>
<circle cx="437.5" cy="154.4" r="8.5" fill="#1f1f1f" stroke="none" stroke-width="0" opacity="1"/>
<circle cx="437.5" cy="154.4" r="8" fill="url(#kw)" stroke="none" stroke-width="0" opacity="1"/>
<line x1="440.24" y1="153.51" x2="444.96" y2="151.98" stroke="#1a1a1a" stroke-width="1.7" opacity="1" stroke-linecap="round"/>
<text transform="translate(406.6 171.2) scale(0.95 1)" font-family='"Liberation Sans", sans-serif' font-size="7.8" fill="#d8d8d8" text-anchor="middle" font-weight="normal"  stroke="#d8d8d8" stroke-width="0.25">A</text>
<text transform="translate(437.5 171.2) scale(0.95 1)" font-family='"Liberation Sans", sans-serif' font-size="7.8" fill="#d8d8d8" text-anchor="middle" font-weight="normal"  stroke="#d8d8d8" stroke-width="0.25">D</text>
<rect x="381.2" y="167" width="1.2" height="1.2" fill="#b8b8b8" />
<path d="M383.2 170.4H384.8V164.6H388.2V170.4H389.6" fill="none" stroke="#b8b8b8" stroke-width="0.9" opacity="1" stroke-linecap="round" stroke-linejoin="round" />
<rect x="377.2" y="178" width="135.8" height="87" fill="#303030" rx="3" />
<text x="445.4" y="187.2" textLength="18.4" lengthAdjust="spacingAndGlyphs" font-family='"Liberation Sans", sans-serif' font-size="7.5" fill="#5b9bd8" text-anchor="middle" font-weight="normal"  stroke="#5b9bd8" stroke-width="0.25">ADSR</text>
<circle cx="497.4" cy="184.6" r="2.2" fill="#55d8ee" stroke="none" stroke-width="0" opacity="1"/>
<line x1="498" y1="184.6" x2="504.4" y2="184.6" stroke="#55d8ee" stroke-width="1.3" opacity="1" stroke-linecap="butt"/>
<path d="M506.8 184.6L502.9 182.05L502.9 187.15Z" fill="#55d8ee" opacity="1"/>
<line x1="394" y1="191.4" x2="497.4" y2="191.4" stroke="#3e3e3e" stroke-width="0.6" opacity="1" stroke-linecap="butt"/>
<line x1="394" y1="201.6" x2="497.4" y2="201.6" stroke="#3e3e3e" stroke-width="0.6" opacity="1" stroke-linecap="butt"/>
<line x1="394" y1="211.8" x2="497.4" y2="211.8" stroke="#3e3e3e" stroke-width="0.6" opacity="1" stroke-linecap="butt"/>
<line x1="394" y1="222.2" x2="497.4" y2="222.2" stroke="#3e3e3e" stroke-width="0.6" opacity="1" stroke-linecap="butt"/>
<path d="M394.2 222C398 208 402 196 408.8 191.4C413 197 418 200.4 425.6 200.8" fill="none" stroke="#7db4e6" stroke-width="1" opacity="1" stroke-linecap="round" stroke-linejoin="round" />
<path d="M425.6 200.8H461" stroke="#7db4e6" stroke-width="1" stroke-dasharray="2.4 2.2" fill="none"/>
<path d="M461 200.8C465 210 468 219 475.6 222" fill="none" stroke="#7db4e6" stroke-width="1" opacity="1" stroke-linecap="round" stroke-linejoin="round" />
<circle cx="408.8" cy="191.4" r="1.9" fill="#fff" stroke="none" stroke-width="0" opacity="1"/>
<circle cx="425.6" cy="200.8" r="1.9" fill="#fff" stroke="none" stroke-width="0" opacity="1"/>
<circle cx="475.6" cy="222" r="1.9" fill="#fff" stroke="none" stroke-width="0" opacity="1"/>
<circle cx="462.4" cy="214.6" r="1.3" fill="#5b9bd8" stroke="none" stroke-width="0" opacity="1"/>
<path d="M400.67 252.07A9.85 9.85 0 1 1 412.53 252.07" fill="none" stroke="#272727" stroke-width="4.1" stroke-linecap="butt" opacity="1"/>
<path d="M399.68 252.75A11 11 0 1 1 413.52 252.75" fill="none" stroke="#1b1b1b" stroke-width="1.6" stroke-linecap="butt" opacity="1"/>
<path d="M398.82 251.98A11 11 0 0 1 401.1 234.67" fill="none" stroke="#5b9bd8" stroke-width="1.6" stroke-linecap="butt" opacity="1"/>
<circle cx="406.6" cy="244.2" r="8.5" fill="#1f1f1f" stroke="none" stroke-width="0" opacity="1"/>
<circle cx="406.6" cy="244.2" r="8" fill="url(#kw)" stroke="none" stroke-width="0" opacity="1"/>
<line x1="405.07" y1="241.76" x2="402.45" y2="237.55" stroke="#1a1a1a" stroke-width="1.7" opacity="1" stroke-linecap="round"/>
<path d="M425.67 252.07A9.85 9.85 0 1 1 437.53 252.07" fill="none" stroke="#272727" stroke-width="4.1" stroke-linecap="butt" opacity="1"/>
<path d="M424.68 252.75A11 11 0 1 1 438.52 252.75" fill="none" stroke="#1b1b1b" stroke-width="1.6" stroke-linecap="butt" opacity="1"/>
<path d="M423.82 251.98A11 11 0 0 1 426.44 234.49" fill="none" stroke="#5b9bd8" stroke-width="1.6" stroke-linecap="butt" opacity="1"/>
<circle cx="431.6" cy="244.2" r="8.5" fill="#1f1f1f" stroke="none" stroke-width="0" opacity="1"/>
<circle cx="431.6" cy="244.2" r="8" fill="url(#kw)" stroke="none" stroke-width="0" opacity="1"/>
<line x1="430.16" y1="241.71" x2="427.68" y2="237.41" stroke="#1a1a1a" stroke-width="1.7" opacity="1" stroke-linecap="round"/>
<path d="M451.47 252.07A9.85 9.85 0 1 1 463.33 252.07" fill="none" stroke="#272727" stroke-width="4.1" stroke-linecap="butt" opacity="1"/>
<path d="M450.48 252.75A11 11 0 1 1 464.32 252.75" fill="none" stroke="#1b1b1b" stroke-width="1.6" stroke-linecap="butt" opacity="1"/>
<path d="M449.62 251.98A11 11 0 1 1 467.45 239.73" fill="none" stroke="#5b9bd8" stroke-width="1.6" stroke-linecap="butt" opacity="1"/>
<circle cx="457.4" cy="244.2" r="8.5" fill="#1f1f1f" stroke="none" stroke-width="0" opacity="1"/>
<circle cx="457.4" cy="244.2" r="8" fill="url(#kw)" stroke="none" stroke-width="0" opacity="1"/>
<line x1="459.94" y1="242.85" x2="464.32" y2="240.52" stroke="#1a1a1a" stroke-width="1.7" opacity="1" stroke-linecap="round"/>
<path d="M476.67 252.07A9.85 9.85 0 1 1 488.53 252.07" fill="none" stroke="#272727" stroke-width="4.1" stroke-linecap="butt" opacity="1"/>
<path d="M475.68 252.75A11 11 0 1 1 489.52 252.75" fill="none" stroke="#1b1b1b" stroke-width="1.6" stroke-linecap="butt" opacity="1"/>
<path d="M474.82 251.98A11 11 0 0 1 473.07 238.7" fill="none" stroke="#5b9bd8" stroke-width="1.6" stroke-linecap="butt" opacity="1"/>
<circle cx="482.6" cy="244.2" r="8.5" fill="#1f1f1f" stroke="none" stroke-width="0" opacity="1"/>
<circle cx="482.6" cy="244.2" r="8" fill="url(#kw)" stroke="none" stroke-width="0" opacity="1"/>
<line x1="480.06" y1="242.85" x2="475.68" y2="240.52" stroke="#1a1a1a" stroke-width="1.7" opacity="1" stroke-linecap="round"/>
<text transform="translate(406.6 260.8) scale(0.95 1)" font-family='"Liberation Sans", sans-serif' font-size="7.8" fill="#d8d8d8" text-anchor="middle" font-weight="normal"  stroke="#d8d8d8" stroke-width="0.25">A</text>
<text transform="translate(431.6 260.8) scale(0.95 1)" font-family='"Liberation Sans", sans-serif' font-size="7.8" fill="#d8d8d8" text-anchor="middle" font-weight="normal"  stroke="#d8d8d8" stroke-width="0.25">D</text>
<text transform="translate(457.4 260.8) scale(0.95 1)" font-family='"Liberation Sans", sans-serif' font-size="7.8" fill="#d8d8d8" text-anchor="middle" font-weight="normal"  stroke="#d8d8d8" stroke-width="0.25">S</text>
<text transform="translate(482.6 260.8) scale(0.95 1)" font-family='"Liberation Sans", sans-serif' font-size="7.8" fill="#d8d8d8" text-anchor="middle" font-weight="normal"  stroke="#d8d8d8" stroke-width="0.25">R</text>
<rect x="381.2" y="257" width="1.2" height="1.2" fill="#b8b8b8" />
<path d="M383.2 260.4H384.8V254.6H388.2V260.4H389.6" fill="none" stroke="#b8b8b8" stroke-width="0.9" opacity="1" stroke-linecap="round" stroke-linejoin="round" />
<rect x="377.2" y="267.9" width="90.2" height="85.9" fill="#303030" rx="3" />
<text x="422.2" y="276.6" textLength="9.6" lengthAdjust="spacingAndGlyphs" font-family='"Liberation Sans", sans-serif' font-size="7.5" fill="#f0902a" text-anchor="middle" font-weight="normal"  stroke="#f0902a" stroke-width="0.25">AD</text>
<circle cx="452" cy="274" r="2.2" fill="#55d8ee" stroke="none" stroke-width="0" opacity="1"/>
<line x1="452.6" y1="274" x2="459" y2="274" stroke="#55d8ee" stroke-width="1.3" opacity="1" stroke-linecap="butt"/>
<path d="M461.4 274L457.5 271.45L457.5 276.55Z" fill="#55d8ee" opacity="1"/>
<line x1="394" y1="281.4" x2="449" y2="281.4" stroke="#3e3e3e" stroke-width="0.6" opacity="1" stroke-linecap="butt"/>
<line x1="394" y1="291.6" x2="449" y2="291.6" stroke="#3e3e3e" stroke-width="0.6" opacity="1" stroke-linecap="butt"/>
<line x1="394" y1="301.8" x2="449" y2="301.8" stroke="#3e3e3e" stroke-width="0.6" opacity="1" stroke-linecap="butt"/>
<line x1="394" y1="312" x2="449" y2="312" stroke="#3e3e3e" stroke-width="0.6" opacity="1" stroke-linecap="butt"/>
<path d="M394.2 311.6C398 302 402 288 406.8 281.4C410 292 414 308 423.2 311.8" fill="none" stroke="#f0902a" stroke-width="1" opacity="1" stroke-linecap="round" stroke-linejoin="round" />
<circle cx="406.8" cy="281.4" r="1.9" fill="#fff" stroke="none" stroke-width="0" opacity="1"/>
<circle cx="423.2" cy="311.8" r="1.9" fill="#fff" stroke="none" stroke-width="0" opacity="1"/>
<circle cx="412.6" cy="303.8" r="1.3" fill="#f0902a" stroke="none" stroke-width="0" opacity="1"/>
<path d="M400.87 340.87A9.85 9.85 0 1 1 412.73 340.87" fill="none" stroke="#272727" stroke-width="4.1" stroke-linecap="butt" opacity="1"/>
<path d="M399.88 341.55A11 11 0 1 1 413.72 341.55" fill="none" stroke="#1b1b1b" stroke-width="1.6" stroke-linecap="butt" opacity="1"/>
<path d="M399.02 340.78A11 11 0 0 1 405.65 322.06" fill="none" stroke="#f0902a" stroke-width="1.6" stroke-linecap="butt" opacity="1"/>
<circle cx="406.8" cy="333" r="8.5" fill="#1f1f1f" stroke="none" stroke-width="0" opacity="1"/>
<circle cx="406.8" cy="333" r="8" fill="url(#kw)" stroke="none" stroke-width="0" opacity="1"/>
<line x1="406.4" y1="330.15" x2="405.71" y2="325.24" stroke="#1a1a1a" stroke-width="1.7" opacity="1" stroke-linecap="round"/>
<path d="M431.57 340.87A9.85 9.85 0 1 1 443.43 340.87" fill="none" stroke="#272727" stroke-width="4.1" stroke-linecap="butt" opacity="1"/>
<path d="M430.58 341.55A11 11 0 1 1 444.42 341.55" fill="none" stroke="#1b1b1b" stroke-width="1.6" stroke-linecap="butt" opacity="1"/>
<path d="M429.72 340.78A11 11 0 0 1 437.5 322" fill="none" stroke="#f0902a" stroke-width="1.6" stroke-linecap="butt" opacity="1"/>
<circle cx="437.5" cy="333" r="8.5" fill="#1f1f1f" stroke="none" stroke-width="0" opacity="1"/>
<circle cx="437.5" cy="333" r="8" fill="url(#kw)" stroke="none" stroke-width="0" opacity="1"/>
<line x1="437.6" y1="330.12" x2="437.77" y2="325.16" stroke="#1a1a1a" stroke-width="1.7" opacity="1" stroke-linecap="round"/>
<text transform="translate(406.6 350.6) scale(0.95 1)" font-family='"Liberation Sans", sans-serif' font-size="7.8" fill="#d8d8d8" text-anchor="middle" font-weight="normal"  stroke="#d8d8d8" stroke-width="0.25">A</text>
<text transform="translate(437.5 350.6) scale(0.95 1)" font-family='"Liberation Sans", sans-serif' font-size="7.8" fill="#d8d8d8" text-anchor="middle" font-weight="normal"  stroke="#d8d8d8" stroke-width="0.25">D</text>
<rect x="381.2" y="347" width="1.2" height="1.2" fill="#b8b8b8" />
<path d="M383.2 350.4H384.8V344.6H388.2V350.4H389.6" fill="none" stroke="#b8b8b8" stroke-width="0.9" opacity="1" stroke-linecap="round" stroke-linejoin="round" />
<rect x="469.6" y="267.9" width="43.4" height="85.9" fill="#303030" rx="3" />
<text x="491" y="276.6" textLength="30.6" lengthAdjust="spacingAndGlyphs" font-family='"Liberation Sans", sans-serif' font-size="7.5" fill="#f0902a" text-anchor="middle" font-weight="normal"  stroke="#f0902a" stroke-width="0.25">Distortion</text>
<rect x="481" y="283.6" width="20.4" height="20.4" fill="none" stroke="#4e4038" stroke-width="0.7"/>
<path d="M481.4 303.6C490 301 489 287 501 284" fill="none" stroke="#f0902a" stroke-width="1.1" opacity="1" stroke-linecap="round" stroke-linejoin="round" />
<path d="M483.61 337.74A11.95 11.95 0 1 1 497.99 337.74" fill="none" stroke="#272727" stroke-width="4.3" stroke-linecap="butt" opacity="1"/>
<path d="M482.49 338.46A13.2 13.2 0 1 1 499.11 338.46" fill="none" stroke="#1b1b1b" stroke-width="1.6" stroke-linecap="butt" opacity="1"/>
<path d="M481.47 337.53A13.2 13.2 0 0 1 478.4 332.71" fill="none" stroke="#f0902a" stroke-width="1.6" stroke-linecap="butt" opacity="1"/>
<circle cx="490.8" cy="328.2" r="10.5" fill="#1f1f1f" stroke="none" stroke-width="0" opacity="1"/>
<circle cx="490.8" cy="328.2" r="10" fill="url(#kw)" stroke="none" stroke-width="0" opacity="1"/>
<line x1="487.46" y1="329.55" x2="481.71" y2="331.87" stroke="#1a1a1a" stroke-width="1.7" opacity="1" stroke-linecap="round"/>
<text transform="translate(491.4 349.6) scale(0.93 1)" font-family='"Liberation Sans", sans-serif' font-size="7.6" fill="#d4d4d4" text-anchor="middle" font-weight="normal"  stroke="#d4d4d4" stroke-width="0.15">+3.2 dB</text>
<rect x="515.6" y="178" width="88.4" height="132" fill="#303030" rx="3" />
<text x="559.6" y="186.8" textLength="16.4" lengthAdjust="spacingAndGlyphs" font-family='"Liberation Sans", sans-serif' font-size="7.5" fill="#ec2f4f" text-anchor="middle" font-weight="normal"  stroke="#ec2f4f" stroke-width="0.25">Mixer</text>
<path d="M534.68 207.19A10 10 0 1 1 546.72 207.19" fill="none" stroke="#272727" stroke-width="4.8" stroke-linecap="butt" opacity="1"/>
<path d="M533.46 208.14A11.5 11.5 0 1 1 547.94 208.14" fill="none" stroke="#1b1b1b" stroke-width="1.6" stroke-linecap="butt" opacity="1"/>
<path d="M532.57 207.33A11.5 11.5 0 1 1 551.51 195.27" fill="none" stroke="#ec2f4f" stroke-width="1.6" stroke-linecap="butt" opacity="1"/>
<circle cx="540.7" cy="199.2" r="8.3" fill="#1f1f1f" stroke="none" stroke-width="0" opacity="1"/>
<circle cx="540.7" cy="199.2" r="7.8" fill="url(#kw)" stroke="none" stroke-width="0" opacity="1"/>
<line x1="543.3" y1="198.15" x2="547.79" y2="196.34" stroke="#1a1a1a" stroke-width="1.7" opacity="1" stroke-linecap="round"/>
<text transform="translate(559.2 202.1) scale(0.95 1)" font-family='"Liberation Sans", sans-serif' font-size="7.8" fill="#a4a4a4" text-anchor="middle" font-weight="normal"  stroke="#a4a4a4" stroke-width="0.2">S</text>
<path d="M572.28 207.19A10 10 0 1 1 584.32 207.19" fill="none" stroke="#272727" stroke-width="4.8" stroke-linecap="butt" opacity="1"/>
<path d="M571.06 208.14A11.5 11.5 0 1 1 585.54 208.14" fill="none" stroke="#1b1b1b" stroke-width="1.6" stroke-linecap="butt" opacity="1"/>
<path d="M567.49 195.27A11.5 11.5 0 0 1 578.3 187.7" fill="none" stroke="#ec2f4f" stroke-width="1.6" stroke-linecap="butt" opacity="1"/>
<circle cx="578.3" cy="199.2" r="8.3" fill="#1f1f1f" stroke="none" stroke-width="0" opacity="1"/>
<circle cx="578.3" cy="199.2" r="7.8" fill="url(#kw)" stroke="none" stroke-width="0" opacity="1"/>
<line x1="575.63" y1="198.33" x2="571.03" y2="196.84" stroke="#1a1a1a" stroke-width="1.7" opacity="1" stroke-linecap="round"/>
<text transform="translate(541 216.2) scale(0.93 1)" font-family='"Liberation Sans", sans-serif' font-size="7.4" fill="#d4d4d4" text-anchor="middle" font-weight="normal"  stroke="#d4d4d4" stroke-width="0.15">-2.9 dB</text>
<path d="M558.2 212H559.8L562.6 209.8V216.6L559.8 214.4H558.2Z" fill="#ec2f4f"/>
<text transform="translate(579.4 216.2) scale(0.93 1)" font-family='"Liberation Sans", sans-serif' font-size="7.4" fill="#d4d4d4" text-anchor="middle" font-weight="normal"  stroke="#d4d4d4" stroke-width="0.15">-56.5 %</text>
<path d="M534.68 251.79A10 10 0 1 1 546.72 251.79" fill="none" stroke="#272727" stroke-width="4.8" stroke-linecap="butt" opacity="1"/>
<path d="M533.46 252.74A11.5 11.5 0 1 1 547.94 252.74" fill="none" stroke="#1b1b1b" stroke-width="1.6" stroke-linecap="butt" opacity="1"/>
<path d="M532.57 251.93A11.5 11.5 0 0 1 546.79 234.05" fill="none" stroke="#ec2f4f" stroke-width="1.6" stroke-linecap="butt" opacity="1"/>
<circle cx="540.7" cy="243.8" r="8.3" fill="#1f1f1f" stroke="none" stroke-width="0" opacity="1"/>
<circle cx="540.7" cy="243.8" r="7.8" fill="url(#kw)" stroke="none" stroke-width="0" opacity="1"/>
<line x1="542.1" y1="241.37" x2="544.52" y2="237.18" stroke="#1a1a1a" stroke-width="1.7" opacity="1" stroke-linecap="round"/>
<text transform="translate(559.2 246.7) scale(0.95 1)" font-family='"Liberation Sans", sans-serif' font-size="7.8" fill="#a4a4a4" text-anchor="middle" font-weight="normal"  stroke="#a4a4a4" stroke-width="0.2">S</text>
<path d="M572.28 251.79A10 10 0 1 1 584.32 251.79" fill="none" stroke="#272727" stroke-width="4.8" stroke-linecap="butt" opacity="1"/>
<path d="M571.06 252.74A11.5 11.5 0 1 1 585.54 252.74" fill="none" stroke="#1b1b1b" stroke-width="1.6" stroke-linecap="butt" opacity="1"/>
<path d="M578.3 232.3A11.5 11.5 0 0 1 587.11 236.41" fill="none" stroke="#ec2f4f" stroke-width="1.6" stroke-linecap="butt" opacity="1"/>
<circle cx="578.3" cy="243.8" r="8.3" fill="#1f1f1f" stroke="none" stroke-width="0" opacity="1"/>
<circle cx="578.3" cy="243.8" r="7.8" fill="url(#kw)" stroke="none" stroke-width="0" opacity="1"/>
<line x1="580.39" y1="241.92" x2="583.98" y2="238.69" stroke="#1a1a1a" stroke-width="1.7" opacity="1" stroke-linecap="round"/>
<text transform="translate(541 260.8) scale(0.93 1)" font-family='"Liberation Sans", sans-serif' font-size="7.4" fill="#d4d4d4" text-anchor="middle" font-weight="normal"  stroke="#d4d4d4" stroke-width="0.15">-7.2 dB</text>
<path d="M558.2 256.6H559.8L562.6 254.4V261.2L559.8 259H558.2Z" fill="#ec2f4f"/>
<text transform="translate(579.4 260.8) scale(0.93 1)" font-family='"Liberation Sans", sans-serif' font-size="7.4" fill="#d4d4d4" text-anchor="middle" font-weight="normal"  stroke="#d4d4d4" stroke-width="0.15">37.5 %</text>
<path d="M534.68 296.79A10 10 0 1 1 546.72 296.79" fill="none" stroke="#272727" stroke-width="4.8" stroke-linecap="butt" opacity="1"/>
<path d="M533.46 297.74A11.5 11.5 0 1 1 547.94 297.74" fill="none" stroke="#1b1b1b" stroke-width="1.6" stroke-linecap="butt" opacity="1"/>
<path d="M532.57 296.93A11.5 11.5 0 1 1 551.51 284.87" fill="none" stroke="#ec2f4f" stroke-width="1.6" stroke-linecap="butt" opacity="1"/>
<circle cx="540.7" cy="288.8" r="8.3" fill="#1f1f1f" stroke="none" stroke-width="0" opacity="1"/>
<circle cx="540.7" cy="288.8" r="7.8" fill="url(#kw)" stroke="none" stroke-width="0" opacity="1"/>
<line x1="543.3" y1="287.75" x2="547.79" y2="285.94" stroke="#1a1a1a" stroke-width="1.7" opacity="1" stroke-linecap="round"/>
<text transform="translate(559.2 291.7) scale(0.95 1)" font-family='"Liberation Sans", sans-serif' font-size="7.8" fill="#a4a4a4" text-anchor="middle" font-weight="normal"  stroke="#a4a4a4" stroke-width="0.2">S</text>
<path d="M572.28 296.79A10 10 0 1 1 584.32 296.79" fill="none" stroke="#272727" stroke-width="4.8" stroke-linecap="butt" opacity="1"/>
<path d="M571.06 297.74A11.5 11.5 0 1 1 585.54 297.74" fill="none" stroke="#1b1b1b" stroke-width="1.6" stroke-linecap="butt" opacity="1"/>
<circle cx="578.3" cy="288.8" r="8.3" fill="#1f1f1f" stroke="none" stroke-width="0" opacity="1"/>
<circle cx="578.3" cy="288.8" r="7.8" fill="url(#kw)" stroke="none" stroke-width="0" opacity="1"/>
<line x1="578.3" y1="285.99" x2="578.3" y2="281.16" stroke="#1a1a1a" stroke-width="1.7" opacity="1" stroke-linecap="round"/>
<text transform="translate(541 305.8) scale(0.93 1)" font-family='"Liberation Sans", sans-serif' font-size="7.4" fill="#d4d4d4" text-anchor="middle" font-weight="normal"  stroke="#d4d4d4" stroke-width="0.15">-2.8 dB</text>
<path d="M558.2 301.6H559.8L562.6 299.4V306.2L559.8 304H558.2Z" fill="#ec2f4f"/>
<text transform="translate(579.4 305.8) scale(0.93 1)" font-family='"Liberation Sans", sans-serif' font-size="7.4" fill="#d4d4d4" text-anchor="middle" font-weight="normal"  stroke="#d4d4d4" stroke-width="0.15">0.00 %</text>
<circle cx="520.2" cy="302.6" r="1.7" fill="none" stroke="#7a2434" stroke-width="1" opacity="1"/>
<rect x="606.8" y="178" width="134.6" height="86.4" fill="#303030" rx="3" />
<text x="674.6" y="187" textLength="40" lengthAdjust="spacingAndGlyphs" font-family='"Liberation Sans", sans-serif' font-size="7.5" fill="#ec2f4f" text-anchor="middle" font-weight="normal"  stroke="#ec2f4f" stroke-width="0.25">Low-pass LD</text>
<path d="M623.26 205.33A7.55 7.55 0 1 1 632.34 205.33" fill="none" stroke="#272727" stroke-width="3.7" stroke-linecap="butt" opacity="1"/>
<path d="M622.45 205.91A8.5 8.5 0 1 1 633.15 205.91" fill="none" stroke="#1d1d1d" stroke-width="1.5" stroke-linecap="butt" opacity="1"/>
<path d="M621.79 205.31A8.5 8.5 0 0 1 627.8 190.8" fill="none" stroke="#ec2f4f" stroke-width="1.7" stroke-linecap="butt" opacity="1"/>
<circle cx="627.8" cy="199.3" r="6.3" fill="#1f1f1f" stroke="none" stroke-width="0" opacity="1"/>
<circle cx="627.8" cy="199.3" r="5.9" fill="url(#kd)" stroke="none" stroke-width="0" opacity="1"/>
<line x1="627.8" y1="197.24" x2="627.8" y2="193.7" stroke="#f0f0f0" stroke-width="1.5" opacity="1" stroke-linecap="round"/>
<path d="M623.26 227.93A7.55 7.55 0 1 1 632.34 227.93" fill="none" stroke="#272727" stroke-width="3.7" stroke-linecap="butt" opacity="1"/>
<path d="M622.45 228.51A8.5 8.5 0 1 1 633.15 228.51" fill="none" stroke="#1d1d1d" stroke-width="1.5" stroke-linecap="butt" opacity="1"/>
<path d="M621.79 227.91A8.5 8.5 0 1 1 633.81 227.91" fill="none" stroke="#f0902a" stroke-width="1.7" stroke-linecap="butt" opacity="1"/>
<circle cx="627.8" cy="221.9" r="6.3" fill="#1f1f1f" stroke="none" stroke-width="0" opacity="1"/>
<circle cx="627.8" cy="221.9" r="5.9" fill="url(#kd)" stroke="none" stroke-width="0" opacity="1"/>
<line x1="629.13" y1="223.48" x2="631.4" y2="226.19" stroke="#ffffff" stroke-width="1.5" opacity="1" stroke-linecap="round"/>
<path d="M623.26 248.23A7.55 7.55 0 1 1 632.34 248.23" fill="none" stroke="#272727" stroke-width="3.7" stroke-linecap="butt" opacity="1"/>
<path d="M622.45 248.81A8.5 8.5 0 1 1 633.15 248.81" fill="none" stroke="#1d1d1d" stroke-width="1.5" stroke-linecap="butt" opacity="1"/>
<path d="M621.79 248.21A8.5 8.5 0 0 1 627.8 233.7" fill="none" stroke="#f0902a" stroke-width="1.7" stroke-linecap="butt" opacity="1"/>
<circle cx="627.8" cy="242.2" r="6.3" fill="#1f1f1f" stroke="none" stroke-width="0" opacity="1"/>
<circle cx="627.8" cy="242.2" r="5.9" fill="url(#kd)" stroke="none" stroke-width="0" opacity="1"/>
<line x1="627.8" y1="240.13" x2="627.8" y2="236.59" stroke="#f0f0f0" stroke-width="1.5" opacity="1" stroke-linecap="round"/>
<rect x="624.3" y="254" width="1.6" height="6.4" fill="#f0902a" />
<rect x="627" y="254" width="1.6" height="6.4" fill="#f0902a" />
<rect x="629.7" y="254" width="1.6" height="6.4" fill="#f0902a" />
<path d="M620.6 257.2L623 255.4L623 259Z" fill="#f0902a"/>
<path d="M635 257.2L632.6 255.4L632.6 259Z" fill="#f0902a"/>
<path d="M664.01 235.66A17.1 17.1 0 1 1 684.59 235.66" fill="none" stroke="#272727" stroke-width="5" stroke-linecap="butt" opacity="1"/>
<path d="M662.53 236.53A18.7 18.7 0 1 1 686.07 236.53" fill="none" stroke="#1b1b1b" stroke-width="1.6" stroke-linecap="butt" opacity="1"/>
<path d="M661.08 235.22A18.7 18.7 0 0 1 681.91 204.92" fill="none" stroke="#ec2f4f" stroke-width="1.6" stroke-linecap="butt" opacity="1"/>
<circle cx="674.3" cy="222" r="15.3" fill="#1f1f1f" stroke="none" stroke-width="0" opacity="1"/>
<circle cx="674.3" cy="222" r="14.8" fill="url(#kw)" stroke="none" stroke-width="0" opacity="1"/>
<line x1="676.55" y1="217.17" x2="680.43" y2="208.85" stroke="#1a1a1a" stroke-width="1.7" opacity="1" stroke-linecap="round"/>
<text x="674.2" y="246.2" textLength="26.8" lengthAdjust="spacingAndGlyphs" font-family='"Liberation Sans", sans-serif' font-size="7.5" fill="#d4d4d4" text-anchor="middle" font-weight="normal"  stroke="#d4d4d4" stroke-width="0.15">1.63 kHz</text>
<text transform="translate(658 260.2) scale(0.95 1)" font-family='"Liberation Sans", sans-serif' font-size="7.5" fill="#d8d8d8" text-anchor="middle" font-weight="normal"  stroke="#d8d8d8" stroke-width="0.2">6</text>
<text transform="translate(668.8 260.2) scale(0.95 1)" font-family='"Liberation Sans", sans-serif' font-size="7.5" fill="#d8d8d8" text-anchor="middle" font-weight="normal"  stroke="#d8d8d8" stroke-width="0.2">12</text>
<text transform="translate(679.6 260.2) scale(0.95 1)" font-family='"Liberation Sans", sans-serif' font-size="7.5" fill="#d8d8d8" text-anchor="middle" font-weight="normal"  stroke="#d8d8d8" stroke-width="0.2">18</text>
<text transform="translate(690.3 260.2) scale(0.95 1)" font-family='"Liberation Sans", sans-serif' font-size="7.5" fill="#f0902a" text-anchor="middle" font-weight="normal"  stroke="#f0902a" stroke-width="0.2">24</text>
<rect x="685.6" y="261.6" width="9.8" height="0.9" fill="#f0902a" />
<path d="M708.91 231.04A11.45 11.45 0 1 1 722.69 231.04" fill="none" stroke="#272727" stroke-width="4.7" stroke-linecap="butt" opacity="1"/>
<path d="M707.68 231.93A12.9 12.9 0 1 1 723.92 231.93" fill="none" stroke="#1b1b1b" stroke-width="1.6" stroke-linecap="butt" opacity="1"/>
<path d="M706.68 231.02A12.9 12.9 0 0 1 712.68 209.38" fill="none" stroke="#ec2f4f" stroke-width="1.6" stroke-linecap="butt" opacity="1"/>
<circle cx="715.8" cy="221.9" r="9.8" fill="#1f1f1f" stroke="none" stroke-width="0" opacity="1"/>
<circle cx="715.8" cy="221.9" r="9.3" fill="url(#kw)" stroke="none" stroke-width="0" opacity="1"/>
<line x1="714.55" y1="218.8" x2="712.39" y2="213.45" stroke="#1a1a1a" stroke-width="1.7" opacity="1" stroke-linecap="round"/>
<path d="M715.8 206.6L714.4 208.6H717.2Z" fill="#8a8a8a"/>
<path d="M731.6 222L734.2 220V224Z" fill="#8a8a8a"/>
<path d="M714.7 241.5C716.7 240.7 717.2 238 717.7 234.8C718.2 238 718.7 240.7 720.7 241.5C719.2 241.5 718.3 241 717.7 240.2C717.1 241 716.2 241.5 714.7 241.5Z" fill="#c8c8c8" stroke="#c8c8c8" stroke-width="0.6" stroke-linejoin="round"/>
<path d="M705.2 253.8V259.2M708.4 257V259.2M710.4 258V259.2M712.2 258.4V259.2M704 259.5H713.6" fill="none" stroke="#f0902a" stroke-width="0.9" opacity="1" stroke-linecap="round" stroke-linejoin="round" />
<rect x="700.8" y="261.7" width="17.8" height="0.9" fill="#f0902a" />
<path d="M721.8 259.4V254.4M723.4 259.4V255.8M725 259.4V256.6M726.6 259.4V257.4M728.2 259.4V258M721.4 259.6H729.6" fill="none" stroke="#a8a8a8" stroke-width="0.8" opacity="1" stroke-linecap="round" stroke-linejoin="round" />
<rect x="11.4" y="267.8" width="134.8" height="86.2" fill="#303030" rx="3" />
<text x="78.6" y="276.6" textLength="14.4" lengthAdjust="spacingAndGlyphs" font-family='"Liberation Sans", sans-serif' font-size="7.5" fill="#5b9bd8" text-anchor="middle" font-weight="normal"  stroke="#5b9bd8" stroke-width="0.25">LFO</text>
<circle cx="132" cy="274" r="2.2" fill="#55d8ee" stroke="none" stroke-width="0" opacity="1"/>
<line x1="132.6" y1="274" x2="139" y2="274" stroke="#55d8ee" stroke-width="1.3" opacity="1" stroke-linecap="butt"/>
<path d="M141.4 274L137.5 271.45L137.5 276.55Z" fill="#55d8ee" opacity="1"/>
<path d="M28.2 288.6H30.8M29.5 287.3V289.9" stroke="#8c8c8c" stroke-width="0.8"/>
<path d="M32.8 286.4V291.2" stroke="#b0b0b0" stroke-width="0.9"/>
<path d="M32.8 284.8L31.5 287L34.1 287Z" fill="#b0b0b0"/>
<path d="M27.7 316.71A7.15 7.15 0 1 1 36.3 316.71" fill="none" stroke="#272727" stroke-width="3.3" stroke-linecap="butt" opacity="1"/>
<path d="M27.03 317.14A7.9 7.9 0 1 1 36.97 317.14" fill="none" stroke="#1d1d1d" stroke-width="1.5" stroke-linecap="butt" opacity="1"/>
<circle cx="32" cy="311" r="6.1" fill="#1f1f1f" stroke="none" stroke-width="0" opacity="1"/>
<circle cx="32" cy="311" r="5.7" fill="url(#kd)" stroke="none" stroke-width="0" opacity="0.75"/>
<line x1="31" y1="312.73" x2="29.29" y2="315.69" stroke="#f0f0f0" stroke-width="1.5" opacity="0.6" stroke-linecap="round"/>
<path d="M27.7 339.11A7.15 7.15 0 1 1 36.3 339.11" fill="none" stroke="#272727" stroke-width="3.3" stroke-linecap="butt" opacity="1"/>
<path d="M27.03 339.54A7.9 7.9 0 1 1 36.97 339.54" fill="none" stroke="#1d1d1d" stroke-width="1.5" stroke-linecap="butt" opacity="1"/>
<circle cx="32" cy="333.4" r="6.1" fill="#1f1f1f" stroke="none" stroke-width="0" opacity="1"/>
<circle cx="32" cy="333.4" r="5.7" fill="url(#kd)" stroke="none" stroke-width="0" opacity="0.75"/>
<line x1="32" y1="331.4" x2="32" y2="327.98" stroke="#f0f0f0" stroke-width="1.5" opacity="0.6" stroke-linecap="round"/>
<path d="M59.6 305.6L66 297.2L72.4 305.6" fill="none" stroke="#5a5a5a" stroke-width="1" opacity="1" stroke-linecap="round" stroke-linejoin="round" />
<path d="M84.4 297.4H91V305.4H97.6V297.4" fill="none" stroke="#5a5a5a" stroke-width="1" opacity="1" stroke-linecap="round" stroke-linejoin="round" />
<path d="M59.6 326L66 317.6L72.4 326" fill="none" stroke="#5a5a5a" stroke-width="1" opacity="1" stroke-linecap="round" stroke-linejoin="round" />
<path d="M84.2 326V317.6L91 326V317.6L97.8 326" fill="none" stroke="#5b9bd8" stroke-width="1.1" opacity="1" stroke-linecap="round" stroke-linejoin="round" />
<path d="M117.05 320.22A11.55 11.55 0 1 1 130.95 320.22" fill="none" stroke="#272727" stroke-width="4.3" stroke-linecap="butt" opacity="1"/>
<path d="M115.94 320.95A12.8 12.8 0 1 1 132.06 320.95" fill="none" stroke="#1b1b1b" stroke-width="1.6" stroke-linecap="butt" opacity="1"/>
<circle cx="124" cy="311" r="10.1" fill="#1f1f1f" stroke="none" stroke-width="0" opacity="1"/>
<circle cx="124" cy="311" r="9.6" fill="url(#kw)" stroke="none" stroke-width="0" opacity="1"/>
<line x1="124" y1="307.54" x2="124" y2="301.59" stroke="#1a1a1a" stroke-width="1.7" opacity="1" stroke-linecap="round"/>
<line x1="124" y1="297" x2="124" y2="299.4" stroke="#9a9a9a" stroke-width="1" opacity="1" stroke-linecap="butt"/>
<text transform="translate(124 330.2) scale(0.92 1)" font-family='"Liberation Sans", sans-serif' font-size="7.8" fill="#cfcfcf" text-anchor="middle" font-weight="normal" >50.0 %</text>
<text transform="translate(72.4 349.2) scale(0.92 1)" font-family='"Liberation Sans", sans-serif' font-size="7.6" fill="#f0902a" text-anchor="middle" font-weight="normal"  stroke="#f0902a" stroke-width="0.2">1.00 bar</text>
<path d="M87.4 345L91 345L89.2 347.4Z" fill="#d8d8d8"/>
<text transform="translate(113.8 349.2) scale(0.95 1)" font-family='"Liberation Sans", sans-serif' font-size="7.6" fill="#c873ea" text-anchor="middle" font-weight="normal" >0 °</text>
<path d="M132.2 345.4H136.2M134.2 343.4V347.4M132.2 349H136.2" stroke="#8a8a8a" stroke-width="0.8" fill="none"/>
<line x1="134.2" y1="341.6" x2="134.2" y2="343.4" stroke="#8a8a8a" stroke-width="0.8" opacity="1" stroke-linecap="butt"/>
</g>
<g fill="none" stroke-linecap="round" style="mix-blend-mode:lighten">
<path d="M109 70C122 92 140 122 151.6 145C163 168 172 199.5 197 199.5" stroke="#c8b02a" stroke-width="1.5" opacity="0.36"/>
<path d="M118 70C132 80 150 96 170 104C180 108 188 109.75 197 109.75" stroke="#c8b02a" stroke-width="1.5" opacity="0.36"/>
<path d="M2.5 154.5C135.5 154.5 202 159.5 335 159.5" stroke="#a8a03a" stroke-width="1.3" opacity="0.5"/>
<path d="M2.5 154.5C216 204.6 281.7 249.5 335 249.5" stroke="#c8b02a" stroke-width="1.6" opacity="0.34"/>
<path d="M2.5 154.5C186 246 292.4 339.5 335 339.5" stroke="#c8b02a" stroke-width="1.6" opacity="0.34"/>
<path d="M2.5 154.5H16" stroke="#ecd02c" stroke-width="1.5" opacity="0.9"/>
<path d="M14 154.5H60" stroke="#c8b02a" stroke-width="1.4" opacity="0.36"/>
<path d="M48 259C115.05 259 129.95 289.25 197 289.25" stroke="#d4ba2a" stroke-width="1.6" opacity="0.55"/>
<path d="M48 259C241 291 282 328.75 335 328.75" stroke="#c8b02a" stroke-width="1.6" opacity="0.34"/>
<path d="M48 259C80 259 -20 288.6 14 288.6" stroke="#ecd02c" stroke-width="1.8" opacity="1"/>
<path d="M185.5 154.5C245.3 154.5 275.2 149.25 335 149.25" stroke="#a89f78" stroke-width="1.3" opacity="0.65"/>
<line x1="185.5" y1="154.4" x2="199" y2="154.4" stroke="#ecd02c" stroke-width="1.3" opacity="0.9" stroke-linecap="butt"/>
<path d="M48 244.6C62 244.6 60.5 238 59 228C57 212 52.5 195 51.6 172C51 160 52 154.5 60 154.5" stroke="#c873ea" stroke-width="1.8" opacity="1"/>
<path d="M48 244.6H61" stroke="#c873ea" stroke-width="1.6" opacity="1"/>
<path d="M322.5 199.5C388 199.5 132 132 197 132" stroke="#4f8fd0" stroke-width="1.4" opacity="0.6"/>
<path d="M185 244.6H200C240 244.6 300 238.75 335 238.75" stroke="#4f8fd0" stroke-width="1.3" opacity="0.55"/>
<path d="M139.3 288.6C175 288.6 160 221.75 197 221.75" stroke="#5a96d4" stroke-width="1.4" opacity="0.7"/>
<path d="M139.3 288.6C168.15 288.6 168.15 311.75 197 311.75" stroke="#5a96d4" stroke-width="1.4" opacity="0.7"/>
<path d="M322.5 109.75H381" stroke="#62c21c" stroke-width="1.4" opacity="1"/>
<path d="M322.5 199.5H381" stroke="#5b9bd8" stroke-width="1.3" opacity="0.9"/>
<path d="M322.5 289.25H381" stroke="#ecd02c" stroke-width="1.4" opacity="1"/>
<path d="M368.6 154.25H381" stroke="#ecd02c" stroke-width="1.3" opacity="1"/>
<path d="M368.6 244.25H381" stroke="#ecd02c" stroke-width="1.3" opacity="1"/>
<path d="M368.6 334H381" stroke="#ecd02c" stroke-width="1.3" opacity="1"/>
<linearGradient id="wg1" gradientUnits="userSpaceOnUse" x1="462" y1="132" x2="500" y2="74"><stop offset="0" stop-color="#5b9bd8" stop-opacity="1"/><stop offset="1" stop-color="#3e6896" stop-opacity="0.55"/></linearGradient>
<path d="M460 132C488 132 488 96 502 70" stroke="url(#wg1)" stroke-width="1.7"/>
<linearGradient id="wg2" gradientUnits="userSpaceOnUse" x1="462" y1="110" x2="492" y2="170"><stop offset="0" stop-color="#ec2f4f" stop-opacity="1"/><stop offset="1" stop-color="#8e2438" stop-opacity="0.85"/></linearGradient>
<path d="M460 109.75C496 109.75 484 199.5 510 199.5" stroke="url(#wg2)" stroke-width="1.8"/>
<path d="M506 199.5H518" stroke="#ec2f4f" stroke-width="1.7" opacity="1"/>
<path d="M506 199.5C524 199.5 500 244.25 518 244.25" stroke="#ec2f4f" stroke-width="1.7" opacity="1"/>
<path d="M460 289.25H471" stroke="#ec2f4f" stroke-width="1.5" opacity="1"/>
<path d="M507.6 289.25H519" stroke="#f0902a" stroke-width="1.5" opacity="1"/>
<linearGradient id="wg3" gradientUnits="userSpaceOnUse" x1="462" y1="311" x2="530" y2="270"><stop offset="0" stop-color="#5b9bd8" stop-opacity="0.95"/><stop offset="1" stop-color="#41709f" stop-opacity="0.55"/></linearGradient>
<path d="M460 311.75C530 311.75 545 221.75 610 221.75" stroke="url(#wg3)" stroke-width="1.4"/>
<path d="M596.6 199.4H611" stroke="#ec2f4f" stroke-width="1.7" opacity="1"/>
<linearGradient id="wg4" gradientUnits="userSpaceOnUse" x1="737" y1="199.5" x2="790" y2="244"><stop offset="0" stop-color="#d42c48" stop-opacity="1"/><stop offset="1" stop-color="#a02438" stop-opacity="0.9"/></linearGradient>
<path d="M735 199.5C768 199.5 760 244.25 792 244.25" stroke="url(#wg4)" stroke-width="1.5"/>
</g>
<g opacity="0.88">
<rect x="70" y="137" width="12.9" height="34.8" fill="#58c61c" />
<rect x="83.4" y="163.2" width="13" height="8.6" fill="#58c61c" />
<rect x="96.9" y="150.8" width="13" height="21" fill="#58c61c" />
<rect x="110.4" y="142.4" width="13" height="29.4" fill="#58c61c" />
<rect x="123.9" y="137" width="13.4" height="34.8" fill="#58c61c" />
<rect x="137.8" y="152" width="13.2" height="19.8" fill="#58c61c" />
<rect x="151.5" y="137" width="13.1" height="15" fill="#2c2c2c" />
<rect x="151.5" y="152" width="13.1" height="19.8" fill="#fbfbf6" />
<rect x="165.1" y="148.2" width="13.2" height="23.6" fill="#58c61c" />
</g>
<path d="M198.4 109.75L194.5 107.2L194.5 112.3Z" fill="#ecd02c" opacity="1"/>
<line x1="190" y1="109.4" x2="196" y2="109.75" stroke="#ecd02c" stroke-width="1.3" opacity="0.7" stroke-linecap="butt"/>
<path d="M198.4 199.5L194.5 196.95L194.5 202.05Z" fill="#ecd02c" opacity="1"/>
<line x1="190" y1="199.3" x2="196" y2="199.5" stroke="#ecd02c" stroke-width="1.3" opacity="0.7" stroke-linecap="butt"/>
<path d="M198.4 289.25L194.5 286.7L194.5 291.8Z" fill="#ecd02c" opacity="1"/>
<line x1="188" y1="288.9" x2="196" y2="289.25" stroke="#ecd02c" stroke-width="1.3" opacity="0.7" stroke-linecap="butt"/>
<path d="M61 154.5L57.1 151.95L57.1 157.05Z" fill="#c873ea" opacity="1"/>
<path d="M61.4 244.6L57.5 242.05L57.5 247.15Z" fill="#c873ea" opacity="1"/>
<path d="M14.6 288.6L10.7 286.05L10.7 291.15Z" fill="#ecd02c" opacity="1"/>
<path d="M198.6 132L194.7 129.45L194.7 134.55Z" fill="#4f8fd0" opacity="0.9"/>
<path d="M198.6 221.75L194.7 219.2L194.7 224.3Z" fill="#5a96d4" opacity="0.9"/>
<path d="M198.6 311.75L194.7 309.2L194.7 314.3Z" fill="#5a96d4" opacity="0.9"/>
<path d="M335.6 149.25L331.7 146.7L331.7 151.8Z" fill="#ecd02c" opacity="0.95"/>
<path d="M335.6 159.5L331.7 156.95L331.7 162.05Z" fill="#ecd02c" opacity="0.95"/>
<path d="M336 238.75L332.1 236.2L332.1 241.3Z" fill="#4f8fd0" opacity="0.9"/>
<path d="M336 249.5L332.1 246.95L332.1 252.05Z" fill="#c8b02a" opacity="0.8"/>
<path d="M336 328.75L332.1 326.2L332.1 331.3Z" fill="#c8b02a" opacity="0.8"/>
<path d="M336 339.5L332.1 336.95L332.1 342.05Z" fill="#c8b02a" opacity="0.8"/>
<path d="M381.6 109.75L377.44 107.03L377.44 112.47Z" fill="#62c21c" opacity="1"/>
<path d="M381.6 199.5L377.44 196.78L377.44 202.22Z" fill="#5b9bd8" opacity="1"/>
<path d="M381.6 289.25L377.44 286.53L377.44 291.97Z" fill="#ecd02c" opacity="1"/>
<path d="M381.6 154.25L377.7 151.7L377.7 156.8Z" fill="#ecd02c" opacity="1"/>
<path d="M381.6 244.25L377.7 241.7L377.7 246.8Z" fill="#ecd02c" opacity="1"/>
<path d="M381.6 334L377.7 331.45L377.7 336.55Z" fill="#ecd02c" opacity="1"/>
<path d="M471.6 289.25L467.96 286.87L467.96 291.63Z" fill="#ec2f4f" opacity="1"/>
<path d="M519.4 289.25L515.76 286.87L515.76 291.63Z" fill="#f0902a" opacity="1"/>
<circle cx="513.4" cy="199.5" r="2" fill="#ec2f4f" stroke="none" stroke-width="0" opacity="1"/>
<circle cx="515.4" cy="244.25" r="2" fill="#ec2f4f" stroke="none" stroke-width="0" opacity="1"/>
<circle cx="604.6" cy="199.4" r="2" fill="#ec2f4f" stroke="none" stroke-width="0" opacity="1"/>
<path d="M611 221.75L607.1 219.2L607.1 224.3Z" fill="#4a86c4" opacity="0.9"/>
<circle cx="791" cy="244.25" r="2" fill="#ec2f4f" stroke="none" stroke-width="0" opacity="1"/>
<circle cx="2.6" cy="154.5" r="2.5" fill="#ecd02c" stroke="none" stroke-width="0" opacity="1"/>
<circle cx="63.2" cy="154.5" r="2.5" fill="#c873ea" stroke="none" stroke-width="0" opacity="1"/>
<circle cx="185.5" cy="154.4" r="2.5" fill="#ecd02c" stroke="none" stroke-width="0" opacity="1"/>
<circle cx="48" cy="244.6" r="2.5" fill="#c873ea" stroke="none" stroke-width="0" opacity="1"/>
<circle cx="63.6" cy="244.6" r="2.5" fill="#c873ea" stroke="none" stroke-width="0" opacity="1"/>
<circle cx="48" cy="259" r="1.85" fill="#1e1e1e" stroke="#ecd02c" stroke-width="1.3" opacity="1"/>
<circle cx="185" cy="244.6" r="1.85" fill="#1e1e1e" stroke="#5b9bd8" stroke-width="1.3" opacity="1"/>
<circle cx="17.2" cy="288.6" r="1.85" fill="#1e1e1e" stroke="#ecd02c" stroke-width="1.3" opacity="1"/>
<circle cx="139.3" cy="288.6" r="1.85" fill="#1e1e1e" stroke="#5b9bd8" stroke-width="1.3" opacity="1"/>
<circle cx="17" cy="311" r="1.85" fill="#1e1e1e" stroke="#c873ea" stroke-width="1.3" opacity="1"/>
<circle cx="17" cy="333.4" r="1.85" fill="#1e1e1e" stroke="#f0902a" stroke-width="1.3" opacity="1"/>
<circle cx="200.8" cy="109.6" r="1.85" fill="#1e1e1e" stroke="#ecd02c" stroke-width="1.3" opacity="1"/>
<circle cx="322.5" cy="109.6" r="2.5" fill="#62c21c" stroke="none" stroke-width="0" opacity="1"/>
<circle cx="200.8" cy="131.8" r="2.5" fill="#c873ea" stroke="none" stroke-width="0" opacity="1"/>
<circle cx="200.8" cy="154.2" r="1.85" fill="#1e1e1e" stroke="#b07a3a" stroke-width="1.3" opacity="1"/>
<circle cx="200.8" cy="199.6" r="1.85" fill="#1e1e1e" stroke="#ecd02c" stroke-width="1.3" opacity="1"/>
<circle cx="322.5" cy="199.6" r="2.5" fill="#5b9bd8" stroke="none" stroke-width="0" opacity="1"/>
<circle cx="200.8" cy="221.8" r="1.85" fill="#1e1e1e" stroke="#c873ea" stroke-width="1.3" opacity="1"/>
<circle cx="200.8" cy="244.2" r="1.85" fill="#1e1e1e" stroke="#b07a3a" stroke-width="1.3" opacity="1"/>
<circle cx="200.8" cy="289.6" r="1.85" fill="#1e1e1e" stroke="#ecd02c" stroke-width="1.3" opacity="1"/>
<circle cx="322.5" cy="289.6" r="2.5" fill="#ecd02c" stroke="none" stroke-width="0" opacity="1"/>
<circle cx="200.8" cy="311.8" r="1.85" fill="#1e1e1e" stroke="#c873ea" stroke-width="1.3" opacity="1"/>
<circle cx="200.8" cy="334.2" r="1.85" fill="#1e1e1e" stroke="#f0902a" stroke-width="1.3" opacity="1"/>
<circle cx="338" cy="149.25" r="2.5" fill="#ecd02c" stroke="none" stroke-width="0" opacity="1"/>
<circle cx="338" cy="159.5" r="2.5" fill="#ecd02c" stroke="none" stroke-width="0" opacity="1"/>
<circle cx="368.2" cy="154.25" r="2.5" fill="#ecd02c" stroke="none" stroke-width="0" opacity="1"/>
<circle cx="338" cy="238.75" r="1.85" fill="#1e1e1e" stroke="#ecd02c" stroke-width="1.3" opacity="1"/>
<circle cx="338" cy="249.5" r="2.5" fill="#ecd02c" stroke="none" stroke-width="0" opacity="1"/>
<circle cx="368.6" cy="244.25" r="1.85" fill="#1e1e1e" stroke="#ecd02c" stroke-width="1.3" opacity="1"/>
<circle cx="338" cy="328.75" r="1.85" fill="#1e1e1e" stroke="#ecd02c" stroke-width="1.3" opacity="1"/>
<circle cx="338" cy="339.5" r="2.5" fill="#ecd02c" stroke="none" stroke-width="0" opacity="1"/>
<circle cx="368.6" cy="334" r="1.85" fill="#1e1e1e" stroke="#ecd02c" stroke-width="1.3" opacity="1"/>
<circle cx="384.2" cy="109.75" r="2.5" fill="#ec2f4f" stroke="none" stroke-width="0" opacity="1"/>
<circle cx="384.2" cy="154.25" r="2.5" fill="#ecd02c" stroke="none" stroke-width="0" opacity="1"/>
<circle cx="460" cy="109.75" r="2.5" fill="#ec2f4f" stroke="none" stroke-width="0" opacity="1"/>
<circle cx="460" cy="132" r="2.5" fill="#5b9bd8" stroke="none" stroke-width="0" opacity="1"/>
<circle cx="460" cy="154.25" r="2.5" fill="#ecd02c" stroke="none" stroke-width="0" opacity="1"/>
<circle cx="384.2" cy="199.5" r="2.5" fill="#ec2f4f" stroke="none" stroke-width="0" opacity="1"/>
<circle cx="384.2" cy="244.25" r="1.85" fill="#1e1e1e" stroke="#ecd02c" stroke-width="1.3" opacity="1"/>
<circle cx="506" cy="199.5" r="1.85" fill="#1e1e1e" stroke="#ec2f4f" stroke-width="1.3" opacity="1"/>
<circle cx="506" cy="221.75" r="1.85" fill="#1e1e1e" stroke="#5b9bd8" stroke-width="1.3" opacity="1"/>
<circle cx="506" cy="244.25" r="2.5" fill="#ecd02c" stroke="none" stroke-width="0" opacity="1"/>
<circle cx="384.2" cy="289.25" r="2.5" fill="#ec2f4f" stroke="none" stroke-width="0" opacity="1"/>
<circle cx="384.2" cy="334" r="1.85" fill="#1e1e1e" stroke="#ecd02c" stroke-width="1.3" opacity="1"/>
<circle cx="460" cy="289.25" r="1.85" fill="#1e1e1e" stroke="#ec2f4f" stroke-width="1.3" opacity="1"/>
<circle cx="460" cy="311.75" r="1.85" fill="#1e1e1e" stroke="#5b9bd8" stroke-width="1.3" opacity="1"/>
<circle cx="460" cy="334" r="2.5" fill="#ecd02c" stroke="none" stroke-width="0" opacity="1"/>
<circle cx="473.8" cy="289.25" r="1.85" fill="#1e1e1e" stroke="#f0902a" stroke-width="1.3" opacity="1"/>
<circle cx="507.6" cy="289.25" r="1.85" fill="#1e1e1e" stroke="#f0902a" stroke-width="1.3" opacity="1"/>
<circle cx="520.2" cy="199.4" r="2.5" fill="#ec2f4f" stroke="none" stroke-width="0" opacity="1"/>
<circle cx="521.4" cy="244.25" r="1.85" fill="#1e1e1e" stroke="#ec2f4f" stroke-width="1.3" opacity="1"/>
<circle cx="521.6" cy="288.8" r="1.85" fill="#1e1e1e" stroke="#ec2f4f" stroke-width="1.3" opacity="1"/>
<circle cx="596.6" cy="199.4" r="2.5" fill="#ec2f4f" stroke="none" stroke-width="0" opacity="1"/>
<circle cx="613.2" cy="199.5" r="2.5" fill="#ec2f4f" stroke="none" stroke-width="0" opacity="1"/>
<circle cx="613.2" cy="221.75" r="1.85" fill="#1e1e1e" stroke="#f0902a" stroke-width="1.3" opacity="1"/>
<circle cx="735" cy="199.5" r="1.85" fill="#1e1e1e" stroke="#ec2f4f" stroke-width="1.3" opacity="1"/>
<circle cx="796" cy="244.25" r="1.85" fill="#1e1e1e" stroke="#ec2f4f" stroke-width="1.3" opacity="1"/>
<rect x="0" y="380.4" width="800" height="1.6" fill="#0a0a0a" />
<rect x="0" y="381.8" width="800" height="1.4" fill="#8c8c8c" />
<rect x="0" y="383.2" width="800" height="1.1" fill="#3a3a3a" />
<rect x="0" y="384.3" width="800" height="1.7" fill="#565656" />
<rect x="0" y="386" width="800" height="0.6" fill="#1a1a1a" />
<rect x="0" y="386.6" width="800" height="150" fill="#0d0d0d" />
<rect x="-3" y="392.5" width="234" height="136.3" fill="#575757" rx="2.5" />
<rect x="0" y="394.5" width="43" height="42.5" fill="#2c2c2c" />
<rect x="0" y="439" width="43" height="43.6" fill="#2c2c2c" />
<rect x="0" y="484.6" width="43" height="42.4" fill="#2c2c2c" />
<rect x="44.6" y="394.5" width="19.6" height="132.5" fill="#474747" />
<rect x="43" y="437" width="22.6" height="2" fill="#575757" />
<rect x="43" y="482.6" width="22.6" height="2" fill="#575757" />
<path d="M51.6 415.8H57.2M54.4 413V418.6" stroke="#f0f0f0" stroke-width="1.9"/>
<path d="M51.6 461H57.2M54.4 458.2V463.8" stroke="#f0f0f0" stroke-width="1.9"/>
<path d="M51.6 505.8H57.2M54.4 503V508.6" stroke="#f0f0f0" stroke-width="1.9"/>
<line x1="14" y1="411.6" x2="43" y2="411.6" stroke="#6c6c6c" stroke-width="0.8" opacity="1" stroke-linecap="butt"/>
<path d="M3.6 423C5.4 414 7.6 404 9.8 400.2C11.6 403 13 408 14.6 411.6M22.6 411.6C24.6 416 26.6 421 28.8 423.2" fill="none" stroke="#ecd02c" stroke-width="1.1" opacity="1" stroke-linecap="round" stroke-linejoin="round" />
<circle cx="18" cy="432.6" r="2.2" fill="#55d8ee" stroke="none" stroke-width="0" opacity="1"/>
<line x1="18.6" y1="432.6" x2="25" y2="432.6" stroke="#55d8ee" stroke-width="1.3" opacity="1" stroke-linecap="butt"/>
<path d="M27.4 432.6L23.5 430.05L23.5 435.15Z" fill="#55d8ee" opacity="1"/>
<path d="M0 449.6L3.4 455.6L8.8 443.6L14.2 455.6L19.6 443.6L25 455.6L30.4 443.6L35.8 455.6L41.2 443.6L43 447" fill="none" stroke="#664622" stroke-width="1" opacity="1" stroke-linecap="round" stroke-linejoin="round" />
<circle cx="18" cy="477.6" r="2.2" fill="#55d8ee" stroke="none" stroke-width="0" opacity="1"/>
<line x1="18.6" y1="477.6" x2="25" y2="477.6" stroke="#55d8ee" stroke-width="1.3" opacity="1" stroke-linecap="butt"/>
<path d="M27.4 477.6L23.5 475.05L23.5 480.15Z" fill="#55d8ee" opacity="1"/>
<path d="M0 500.2H14" fill="none" stroke="#8c7c24" stroke-width="1" opacity="1" stroke-linecap="round" stroke-linejoin="round" />
<path d="M28.8 500.2H31.8V496.8H33.6V493.6H43" fill="none" stroke="#a08c24" stroke-width="1" opacity="1" stroke-linecap="round" stroke-linejoin="round" />
<path d="M15 499.4L21.4 496.2L28 499.4L28 506L21.4 509.4L15 506Z" fill="#8c8c8c"/>
<path d="M15 499.4L21.4 502.6L28 499.4L21.4 496.2Z" fill="#b4b4b4"/>
<path d="M21.4 502.6V509.4L28 506V499.4Z" fill="#6c6c6c"/>
<circle cx="17.4" cy="502.6" r="0.7" fill="#3a3a3a" stroke="none" stroke-width="0" opacity="1"/>
<circle cx="19.6" cy="505.8" r="0.7" fill="#3a3a3a" stroke="none" stroke-width="0" opacity="1"/>
<circle cx="23.8" cy="503.6" r="0.7" fill="#3a3a3a" stroke="none" stroke-width="0" opacity="1"/>
<circle cx="25.8" cy="505" r="0.7" fill="#3a3a3a" stroke="none" stroke-width="0" opacity="1"/>
<circle cx="21.4" cy="499.2" r="0.7" fill="#3a3a3a" stroke="none" stroke-width="0" opacity="1"/>
<circle cx="18" cy="522" r="2.2" fill="#f2f2f2" stroke="none" stroke-width="0" opacity="1"/>
<line x1="18.6" y1="522" x2="25" y2="522" stroke="#f2f2f2" stroke-width="1.3" opacity="1" stroke-linecap="butt"/>
<path d="M27.4 522L23.5 519.45L23.5 524.55Z" fill="#f2f2f2" opacity="1"/>
<rect x="66" y="394.5" width="163" height="88.3" fill="url(#dots)" />
<rect x="66" y="482.8" width="163" height="1.8" fill="#575757" />
<g filter="url(#bl)">
<rect x="78.7" y="420.4" width="129.8" height="43.6" fill="#1a3a56" opacity="0.85"/>
<rect x="95" y="416" width="5.6" height="5.2" fill="#c8a83a" rx="0.6" opacity="0.8"/>
<rect x="121.4" y="409.6" width="5.4" height="6" fill="#5a86b4" rx="0.6" opacity="0.8"/>
<rect x="147.4" y="409.2" width="5.8" height="6.4" fill="#b83452" rx="0.6" opacity="0.8"/>
<rect x="160.8" y="415.6" width="5.6" height="4.4" fill="#a8304e" rx="0.6" opacity="0.8"/>
<rect x="81.4" y="429.4" width="5.6" height="5.6" fill="#8c9a56" rx="0.6" opacity="0.8"/>
<rect x="114.6" y="423" width="18.4" height="11.4" fill="#4c9a3c" rx="0.6" opacity="0.8"/>
<rect x="134.6" y="428.4" width="5.2" height="5.6" fill="#7aa84c" rx="0.6" opacity="0.8"/>
<rect x="140.8" y="423" width="12.4" height="11.4" fill="#4c9a3c" rx="0.6" opacity="0.8"/>
<rect x="81.4" y="442" width="12.4" height="5.6" fill="#4c86c4" rx="0.6" opacity="0.8"/>
<rect x="114.6" y="436" width="18.4" height="11.4" fill="#4c8ed2" rx="0.6" opacity="0.8"/>
<rect x="134.6" y="442" width="5.4" height="5.6" fill="#5a9ae0" rx="0.6" opacity="0.8"/>
<rect x="140.8" y="436" width="18.6" height="11.4" fill="#4a8cd0" rx="0.6" opacity="0.8"/>
<rect x="160.8" y="435.4" width="11.4" height="5.6" fill="#b03c62" rx="0.6" opacity="0.8"/>
<rect x="174.4" y="435.6" width="18.4" height="12" fill="#c23c62" rx="0.6" opacity="0.8"/>
<rect x="200.4" y="442" width="5.2" height="5.6" fill="#b03c62" rx="0.6" opacity="0.8"/>
<rect x="88" y="448.8" width="19" height="11.6" fill="#4c8cce" rx="0.6" opacity="0.8"/>
<rect x="114.6" y="449" width="18.4" height="11.6" fill="#b0b03e" rx="0.6" opacity="0.8"/>
<rect x="134.6" y="455" width="5.2" height="5.6" fill="#a8aa5c" rx="0.6" opacity="0.8"/>
<rect x="140.8" y="449" width="12.4" height="11.6" fill="#c88430" rx="0.6" opacity="0.8"/>
<rect x="154" y="449" width="5.4" height="11.6" fill="#b87a30" rx="0.6" opacity="0.8"/>
</g>
<rect x="78.7" y="420.4" width="129.8" height="43.6" fill="none" stroke="#3daaf6" stroke-width="1.3" rx="1"/>
<rect x="66" y="484.6" width="163" height="42.4" fill="#383838" />
<path d="M80.06 511.54A11.2 11.2 0 1 1 93.54 511.54" fill="none" stroke="#252525" stroke-width="4.2" stroke-linecap="butt" opacity="1"/>
<circle cx="86.8" cy="502.6" r="9.7" fill="#202020" stroke="none" stroke-width="0" opacity="1"/>
<circle cx="86.8" cy="502.6" r="9.2" fill="url(#kd)" stroke="none" stroke-width="0" opacity="1"/>
<line x1="86.8" y1="500.3" x2="86.8" y2="493.86" stroke="#f4f4f4" stroke-width="1.6" opacity="1" stroke-linecap="round"/>
<text transform="translate(88 522.8) scale(0.93 1)" font-family='"Liberation Sans", sans-serif' font-size="7.8" fill="#d8d8d8" text-anchor="middle" font-weight="normal"  stroke="#d8d8d8" stroke-width="0.15">Pitch</text>
<path d="M113.86 511.54A11.2 11.2 0 1 1 127.34 511.54" fill="none" stroke="#252525" stroke-width="4.2" stroke-linecap="butt" opacity="1"/>
<circle cx="120.6" cy="502.6" r="9.7" fill="#202020" stroke="none" stroke-width="0" opacity="1"/>
<circle cx="120.6" cy="502.6" r="9.2" fill="url(#kd)" stroke="none" stroke-width="0" opacity="1"/>
<line x1="119.12" y1="504.36" x2="114.98" y2="509.3" stroke="#f4f4f4" stroke-width="1.6" opacity="1" stroke-linecap="round"/>
<text transform="translate(120.8 522.8) scale(0.93 1)" font-family='"Liberation Sans", sans-serif' font-size="7.8" fill="#d8d8d8" text-anchor="middle" font-weight="normal"  stroke="#d8d8d8" stroke-width="0.15">Glide</text>
<path d="M132.8 522.6H135.6V517H137.6V522.6M137.6 517H139.8V522.6" fill="none" stroke="#8a8a8a" stroke-width="0.8" opacity="1" stroke-linecap="round" stroke-linejoin="round" />
<rect x="145.2" y="487.8" width="40.4" height="36.4" fill="#303030" stroke="#5a5a5a" stroke-width="1.3" rx="1.5"/>
<rect x="147.6" y="490.8" width="35.6" height="14.8" fill="#262626" rx="1" />
<rect x="147.6" y="507.6" width="35.6" height="14.4" fill="#262626" rx="1" />
<rect x="148.4" y="490.8" width="34" height="0.9" fill="#35556e" />
<rect x="148.4" y="507.6" width="34" height="0.9" fill="#3c6c94" />
<text transform="translate(165.6 500.2) scale(0.93 1)" font-family='"Liberation Sans", sans-serif' font-size="7.4" fill="#f2f2f2" text-anchor="middle" font-weight="bold" >Note FX</text>
<text transform="translate(165.6 517.8) scale(0.93 1)" font-family='"Liberation Sans", sans-serif' font-size="7.4" fill="#f2f2f2" text-anchor="middle" font-weight="bold" >FX</text>
<path d="M200.76 511.54A11.2 11.2 0 1 1 214.24 511.54" fill="none" stroke="#252525" stroke-width="4.2" stroke-linecap="butt" opacity="1"/>
<path d="M198.8 511.3A12.3 12.3 0 1 1 219.61 504.74" fill="none" stroke="#ec2f4f" stroke-width="1.7" stroke-linecap="butt" opacity="1"/>
<circle cx="207.5" cy="502.6" r="9.7" fill="#202020" stroke="none" stroke-width="0" opacity="1"/>
<circle cx="207.5" cy="502.6" r="9.2" fill="url(#kd)" stroke="none" stroke-width="0" opacity="1"/>
<line x1="209.75" y1="502.12" x2="216.05" y2="500.78" stroke="#f4f4f4" stroke-width="1.6" opacity="1" stroke-linecap="round"/>
<text transform="translate(207.6 522.8) scale(0.93 1)" font-family='"Liberation Sans", sans-serif' font-size="7.8" fill="#d8d8d8" text-anchor="middle" font-weight="normal"  stroke="#d8d8d8" stroke-width="0.15">Out</text>
<path d="M234.8 461H240.4M237.6 458.2V463.8" stroke="#f0f0f0" stroke-width="1.9"/>
<rect x="234.6" y="512.8" width="3" height="16" fill="url(#vu)" />
<rect x="237.6" y="514.4" width="3" height="14.4" fill="url(#vu)" />
<rect x="234.6" y="511.6" width="3" height="1.2" fill="#d09a2a" />
<rect x="237.6" y="513.2" width="3" height="1.2" fill="#d09a2a" />
<rect x="244.4" y="393" width="17" height="135.8" fill="#3c3c3c" rx="2" />
<path d="M254.56 398.62A2.9 2.9 0 1 1 251.24 398.62" fill="none" stroke="#e8821c" stroke-width="1.4" stroke-linecap="butt" opacity="1"/>
<line x1="252.9" y1="397.2" x2="252.9" y2="400.8" stroke="#e8821c" stroke-width="1.4" opacity="1" stroke-linecap="butt"/>
<path d="M249.7 412.6H252.5V413.8H256.1V418.4H249.7Z" fill="#b8b8b8"/>
<rect x="249.7" y="414.8" width="6.4" height="0.7" fill="#404040" />
<text transform="translate(255.4 461) rotate(-90) scale(0.93 1)" font-family='"Liberation Sans", sans-serif' font-size="6.8" fill="#f4f4f4" text-anchor="middle" font-weight="bold">EQ-5</text>
<rect x="249.1" y="497.2" width="7.6" height="5.6" fill="none" stroke="#d0d0d0" stroke-width="1.1" rx="1.4"/>
<rect x="249.7" y="497.2" width="6.4" height="1.4" fill="#d0d0d0" />
<rect x="249.5" y="509.8" width="1.6" height="1.6" fill="#c8c8c8" />
<rect x="249.5" y="512.4" width="1.6" height="1.6" fill="#c8c8c8" />
<rect x="252.1" y="509.8" width="1.6" height="1.6" fill="#c8c8c8" />
<rect x="252.1" y="512.4" width="1.6" height="1.6" fill="#c8c8c8" />
<rect x="254.7" y="509.8" width="1.6" height="1.6" fill="#c8c8c8" />
<rect x="254.7" y="512.4" width="1.6" height="1.6" fill="#c8c8c8" />
<circle cx="250.5" cy="521.8" r="1.2" fill="none" stroke="#a0a0a0" stroke-width="0.8" opacity="1"/>
<line x1="251.9" y1="521.8" x2="254.5" y2="521.8" stroke="#a0a0a0" stroke-width="0.8" opacity="1" stroke-linecap="butt"/>
<circle cx="255.3" cy="521.8" r="1.1" fill="#a0a0a0" stroke="none" stroke-width="0" opacity="1"/>
<path d="M265.4 461H271M268.2 458.2V463.8" stroke="#f0f0f0" stroke-width="1.9"/>
<rect x="265.2" y="512.8" width="3" height="16" fill="url(#vu)" />
<rect x="268.2" y="514.4" width="3" height="14.4" fill="url(#vu)" />
<rect x="265.2" y="511.6" width="3" height="1.2" fill="#d09a2a" />
<rect x="268.2" y="513.2" width="3" height="1.2" fill="#d09a2a" />
<rect x="275" y="393" width="16.6" height="135.8" fill="#3c3c3c" rx="2" />
<path d="M284.96 398.62A2.9 2.9 0 1 1 281.64 398.62" fill="none" stroke="#e8821c" stroke-width="1.4" stroke-linecap="butt" opacity="1"/>
<line x1="283.3" y1="397.2" x2="283.3" y2="400.8" stroke="#e8821c" stroke-width="1.4" opacity="1" stroke-linecap="butt"/>
<path d="M280.1 412.6H282.9V413.8H286.5V418.4H280.1Z" fill="#b8b8b8"/>
<rect x="280.1" y="414.8" width="6.4" height="0.7" fill="#404040" />
<text transform="translate(285.8 461) rotate(-90) scale(0.93 1)" font-family='"Liberation Sans", sans-serif' font-size="6.8" fill="#f4f4f4" text-anchor="middle" font-weight="bold">REVERB</text>
<rect x="279.9" y="509.8" width="1.6" height="1.6" fill="#c8c8c8" />
<rect x="279.9" y="512.4" width="1.6" height="1.6" fill="#c8c8c8" />
<rect x="282.5" y="509.8" width="1.6" height="1.6" fill="#c8c8c8" />
<rect x="282.5" y="512.4" width="1.6" height="1.6" fill="#c8c8c8" />
<rect x="285.1" y="509.8" width="1.6" height="1.6" fill="#c8c8c8" />
<rect x="285.1" y="512.4" width="1.6" height="1.6" fill="#c8c8c8" />
<circle cx="280.9" cy="521.8" r="1.2" fill="none" stroke="#a0a0a0" stroke-width="0.8" opacity="1"/>
<line x1="282.3" y1="521.8" x2="284.9" y2="521.8" stroke="#a0a0a0" stroke-width="0.8" opacity="1" stroke-linecap="butt"/>
<circle cx="285.7" cy="521.8" r="1.1" fill="#a0a0a0" stroke="none" stroke-width="0" opacity="1"/>
<path d="M295.8 461H301.4M298.6 458.2V463.8" stroke="#f0f0f0" stroke-width="1.9"/>
<rect x="295.8" y="512.8" width="3" height="16" fill="url(#vu)" />
<rect x="298.8" y="514.4" width="3" height="14.4" fill="url(#vu)" />
<rect x="295.8" y="511.6" width="3" height="1.2" fill="#d09a2a" />
<rect x="298.8" y="513.2" width="3" height="1.2" fill="#d09a2a" />
<rect x="0" y="536.2" width="800" height="24" fill="#2b2b2b" />
<rect x="0" y="536.2" width="800" height="1" fill="#474747" />
<text transform="translate(9.4 551.2) scale(0.93 1)" font-family='"Liberation Sans", sans-serif' font-size="7.6" fill="#f0902a" text-anchor="end" font-weight="normal" >ARRANGE</text>
<rect x="0" y="559.4" width="9.6" height="0.6" fill="#f0902a" />
<text transform="translate(24.2 551.2) scale(0.93 1)" font-family='"Liberation Sans", sans-serif' font-size="7.6" fill="#e4e4e4" text-anchor="middle" font-weight="normal" >MIX</text>
<text transform="translate(47.2 551.2) scale(0.93 1)" font-family='"Liberation Sans", sans-serif' font-size="7.6" fill="#e4e4e4" text-anchor="middle" font-weight="normal" >EDIT</text>
<rect x="64.6" y="542.6" width="1" height="12.6" fill="#6a6a6a" />
<path d="M73.6 546.6H75.6M77.8 546.6H80.6M73.6 549H76.4M78.8 549H81.6M73.6 551.4H75.2M77 551.4H80" stroke="#e0e0e0" stroke-width="1.2"/>
<circle cx="94.2" cy="550.6" r="1.5" fill="#e0e0e0" stroke="none" stroke-width="0" opacity="1"/>
<circle cx="98" cy="547.2" r="1.5" fill="#e0e0e0" stroke="none" stroke-width="0" opacity="1"/>
<line x1="94.2" y1="550.6" x2="98" y2="547.2" stroke="#e0e0e0" stroke-width="1.3" opacity="1" stroke-linecap="butt"/>
<rect x="111" y="545" width="8" height="7.6" fill="#3a2a1a" stroke="#f0902a" stroke-width="1.7" rx="0.8"/>
<rect x="110" y="559.4" width="10" height="0.6" fill="#f0902a" />
<rect x="130" y="545.4" width="1.9" height="7" fill="#e0e0e0" />
<rect x="132.7" y="545.4" width="1.9" height="7" fill="#e0e0e0" />
<rect x="135.4" y="545.4" width="1.9" height="7" fill="#e0e0e0" />
<path d="M762.2 545H765.2V546.2H769V551.4H762.2Z" fill="#d0d0d0"/>
<rect x="762.2" y="547.4" width="6.8" height="0.7" fill="#2b2b2b" />
<path d="M781.2 544.4H785L787 546.4V551.8H781.2Z" fill="#d0d0d0"/>
<rect x="798.6" y="545.6" width="2" height="5" fill="#9a9a9a" />
</svg>
</body></html>
